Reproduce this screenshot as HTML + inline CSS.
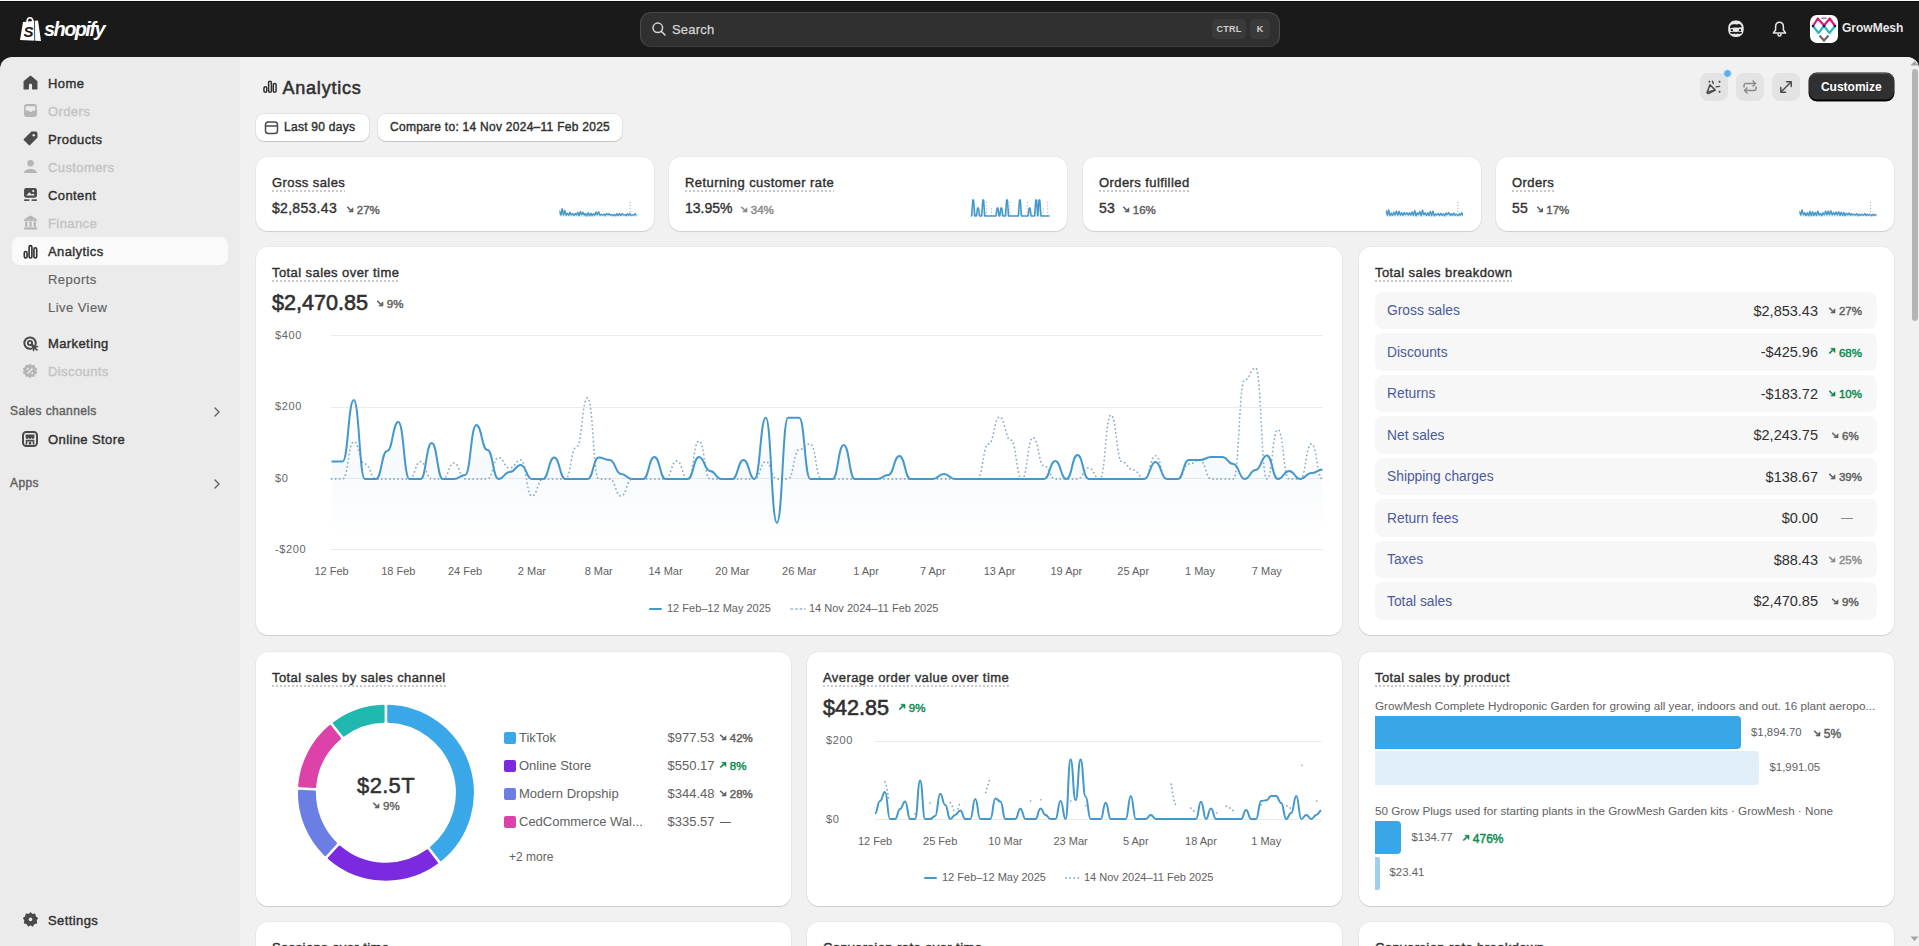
<!DOCTYPE html>
<html><head><meta charset="utf-8">
<style>
*{box-sizing:border-box;margin:0;padding:0}
html,body{width:1919px;height:946px;overflow:hidden;background:#1a1a1a;font-family:"Liberation Sans",sans-serif;color:#303030}
.abs{position:absolute}
#top{position:absolute;left:0;top:0;width:1919px;height:57px;background:#1a1a1a}
#side{position:absolute;left:0;top:57px;width:240px;height:889px;background:#ebebeb;border-top-left-radius:12px}
#main{position:absolute;left:240px;top:57px;width:1679px;height:889px;background:#f1f1f1;border-top-right-radius:12px;overflow:hidden}
.card{position:absolute;background:#fff;border-radius:12px;box-shadow:0 1px 0 rgba(26,26,26,.07),0 1px 0 0 rgba(0,0,0,.05) inset;box-shadow:0 1px 1px rgba(0,0,0,.12), 0 0 0 1px rgba(0,0,0,.03)}
.ttl{position:absolute;font-size:13px;font-weight:normal;-webkit-text-stroke:.4px #303030;color:#303030;white-space:nowrap;letter-spacing:.42px}
.ttl span{background-image:linear-gradient(to right,#c9c9c9 50%,transparent 50%);background-size:4px 1.6px;background-repeat:repeat-x;background-position:0 100%;padding-bottom:1.5px}
.nav{position:absolute;left:48px;font-size:13px;font-weight:normal;-webkit-text-stroke:.4px #303030;letter-spacing:.4px;color:#303030;white-space:nowrap}
.nav.dis{color:#c4c4c4;-webkit-text-stroke:.4px #c4c4c4}
.nav.sub{-webkit-text-stroke:.15px #616161;letter-spacing:.45px;color:#616161}
.ico{position:absolute;left:23px}
.btn{background:#fff;border-radius:8px;box-shadow:0 1px 0 rgba(0,0,0,.12),0 0 0 1px rgba(0,0,0,.06)}
.btxt{font-size:12px;font-weight:normal;-webkit-text-stroke:.4px #303030;letter-spacing:.27px;color:#303030;white-space:nowrap}
.ibtn{width:28px;height:28px;border-radius:8px;background:#e3e3e3}
.kv{font-size:14px;font-weight:normal;color:#303030;white-space:nowrap;letter-spacing:.3px;-webkit-text-stroke:.35px #303030}
</style></head><body>
<div id="top">
  <!-- logo -->
  <svg class="abs" style="left:19px;top:16px" width="24" height="26" viewBox="0 0 24 26"><path d="M4 6 L19 4.5 L22 25 L1 24 Z" fill="#fff"/><path d="M8 6 C8 1 13 0 14 5" stroke="#fff" stroke-width="1.6" fill="none"/><path d="M15.5 4.7 L15.7 25" stroke="#1a1a1a" stroke-width="0.8"/><text x="4.5" y="21" font-family="Liberation Sans" font-weight="bold" font-style="italic" font-size="15" fill="#1a1a1a">S</text></svg>
  <div class="abs" style="left:44px;top:18px;font-size:20px;font-weight:bold;font-style:italic;color:#fff;letter-spacing:-1.6px">shopify</div>
  <!-- search -->
  <div class="abs" style="left:640px;top:11.5px;width:640px;height:35.5px;background:#303030;border:1px solid #4a4a4a;border-bottom-color:#3e3e3e;border-radius:11px"></div>
  <svg class="abs" style="left:651px;top:21px" width="16" height="16" viewBox="0 0 16 16"><circle cx="6.8" cy="6.8" r="4.8" fill="none" stroke="#d4d4d4" stroke-width="1.5"/><path d="M10.3 10.3 L14 14" stroke="#d4d4d4" stroke-width="1.6" stroke-linecap="round"/></svg>
  <div class="abs" style="left:672px;top:22px;font-size:13px;color:#d4d4d4;-webkit-text-stroke:.25px #d4d4d4;letter-spacing:.2px">Search</div>
  <div class="abs" style="left:1212px;top:19px;width:34px;height:20px;background:#3a3a3a;border-radius:5px;font-size:9px;font-weight:bold;color:#cfcfcf;text-align:center;line-height:20px;letter-spacing:.2px">CTRL</div>
  <div class="abs" style="left:1250px;top:19px;width:20px;height:20px;background:#3a3a3a;border-radius:5px;font-size:9px;font-weight:bold;color:#cfcfcf;text-align:center;line-height:20px">K</div>
  <!-- right icons -->
  <svg class="abs" style="left:1727px;top:20px" width="18" height="18" viewBox="0 0 18 18"><rect x="1.2" y="0.6" width="15.5" height="16.4" rx="7" fill="#e8e8e8"/><path d="M2.8 8.5 C3 6 4 4.2 5.5 4.6 C7.5 3.6 9.5 4.8 11 4.2 C13 3.6 14.5 5 14.8 7.5 C13 7 11.5 8 9.5 7.6 C7.5 7.3 5.5 7.8 2.8 8.5 Z" fill="#1a1a1a"/><circle cx="4.8" cy="10.2" r="1.15" fill="#1a1a1a"/><circle cx="13" cy="10.2" r="1.15" fill="#1a1a1a"/><path d="M2.6 12.6 C4.5 11.6 7 11.6 9 12.2 C11 11.6 13.5 11.6 15.4 12.6 C14 14.4 11.5 14 10.2 13.6 C9.8 14.6 8.2 14.6 7.8 13.6 C6.5 14 4 14.4 2.6 12.6 Z" fill="#1a1a1a"/></svg>
  <svg class="abs" style="left:1771px;top:20px" width="17" height="18" viewBox="0 0 17 18"><path d="M8.5 2.2 C5.8 2.2 4.6 4.5 4.6 7 V10 L2.4 12.9 H14.6 L12.4 10 V7 C12.4 4.5 11.2 2.2 8.5 2.2 Z" fill="none" stroke="#e8e8e8" stroke-width="1.5" stroke-linejoin="round"/><path d="M7 13.5 V14.5 A1.5 1.5 0 0 0 10 14.5 V13.5" fill="none" stroke="#e8e8e8" stroke-width="1.5"/></svg>
  <svg class="abs" style="left:1810px;top:15px" width="28" height="28" viewBox="0 0 28 28"><rect width="28" height="28" rx="7" fill="#fff"/><path d="M3 11 L7.8 3.5 L14 10.5 L19.8 3.5 L25 11" fill="none" stroke="#d11f7f" stroke-width="2.2" stroke-linejoin="round"/><path d="M3 11 L8.5 18 L14 11 L19.5 18 L25 11" fill="none" stroke="#2cb7c4" stroke-width="2.2" stroke-linejoin="round"/><path d="M9.5 20.5 L14 25.5 L18.5 20.5" fill="none" stroke="#6b6b6b" stroke-width="2.2"/><rect x="11.5" y="2.5" width="5" height="1.5" fill="#888"/><circle cx="3" cy="11" r="1.3" fill="#1b1464"/><circle cx="14" cy="11" r="1.3" fill="#1b1464"/><circle cx="25" cy="11" r="1.3" fill="#1b1464"/></svg>
  <div class="abs" style="left:1842px;top:21px;font-size:12px;font-weight:bold;color:#e8e8e8">GrowMesh</div>
</div>
<div id="side">
  <!-- Home -->
  <svg class="ico" style="top:18px" width="15" height="15" viewBox="0 0 14 14"><path d="M7 1 L13 6 V13 H9 V9.5 A2 2 0 0 0 5 9.5 V13 H1 V6 Z" fill="#4a4a4a" stroke="#4a4a4a" stroke-width="1" stroke-linejoin="round"/></svg>
  <div class="nav" style="top:19px">Home</div>
  <svg class="ico" style="top:46px" width="15" height="15" viewBox="0 0 14 14"><rect x="1" y="1" width="12" height="12" rx="2.5" fill="#b5b5b5"/><path d="M2.5 3 H11.5 V7 H9 C8.5 8.5 5.5 8.5 5 7 H2.5 Z" fill="#ebebeb"/></svg>
  <div class="nav dis" style="top:47px">Orders</div>
  <svg class="ico" style="top:74px" width="15" height="15" viewBox="0 0 14 14"><path d="M8 1 H12 A1 1 0 0 1 13 2 V6 L6 13 L1 8 Z" fill="#4a4a4a" stroke="#4a4a4a" stroke-linejoin="round"/><circle cx="10" cy="4" r="1.1" fill="#ebebeb"/></svg>
  <div class="nav" style="top:75px">Products</div>
  <svg class="ico" style="top:102px" width="15" height="15" viewBox="0 0 14 14"><circle cx="7" cy="4" r="3" fill="#b5b5b5"/><path d="M1 13 C1 8 13 8 13 13 Z" fill="#b5b5b5"/></svg>
  <div class="nav dis" style="top:103px">Customers</div>
  <svg class="ico" style="top:130px" width="15" height="15" viewBox="0 0 14 14"><rect x="1" y="1" width="12" height="9" rx="2" fill="#4a4a4a"/><path d="M3 8 L6 5 L8 7 L9.5 6 L11 8 Z" fill="#ebebeb"/><circle cx="9.5" cy="3.8" r="1" fill="#ebebeb"/><rect x="1" y="11.5" width="5" height="1.5" fill="#4a4a4a"/><rect x="8" y="11.5" width="5" height="1.5" fill="#4a4a4a"/></svg>
  <div class="nav" style="top:131px">Content</div>
  <svg class="ico" style="top:158px" width="15" height="15" viewBox="0 0 14 14"><path d="M7 0.5 L13 4 H1 Z" fill="#b5b5b5"/><rect x="1" y="4" width="12" height="1.5" fill="#b5b5b5"/><rect x="2" y="6" width="2" height="5" fill="#b5b5b5"/><rect x="6" y="6" width="2" height="5" fill="#b5b5b5"/><rect x="10" y="6" width="2" height="5" fill="#b5b5b5"/><rect x="1" y="11.5" width="12" height="2" fill="#b5b5b5"/></svg>
  <div class="nav dis" style="top:159px">Finance</div>
  <div class="abs" style="left:12px;top:180px;width:216px;height:28px;background:#fafafa;border-radius:8px"></div>
  <svg class="ico" style="top:187px" width="15" height="15" viewBox="0 0 14 14"><rect x="1.2" y="7" width="2.6" height="6" rx="1.3" fill="none" stroke="#303030" stroke-width="1.5"/><rect x="5.7" y="1.5" width="2.6" height="11.5" rx="1.3" fill="none" stroke="#303030" stroke-width="1.5"/><rect x="10.2" y="3.5" width="2.6" height="9.5" rx="1.3" fill="none" stroke="#303030" stroke-width="1.5"/></svg>
  <div class="nav" style="top:187px">Analytics</div>
  <div class="nav sub" style="top:215px">Reports</div>
  <div class="nav sub" style="top:243px">Live View</div>
  <svg class="abs" style="left:22.5px;top:278.5px" width="16" height="16" viewBox="0 0 16 16"><path d="M12.6 8.3 A5.7 5.7 0 1 0 8.1 12.7" fill="none" stroke="#4a4a4a" stroke-width="2" stroke-linecap="round"/><circle cx="7" cy="7" r="2.1" fill="none" stroke="#4a4a4a" stroke-width="1.9"/><path d="M8.2 8.2 L15.2 10.6 L12.3 11.6 L14.6 13.9 L13.9 14.6 L11.6 12.3 L10.6 15.2 Z" fill="#4a4a4a" stroke="#4a4a4a" stroke-width=".8" stroke-linejoin="round"/></svg>
  <div class="nav" style="top:279px">Marketing</div>
  <svg class="abs" style="left:22px;top:306px" width="16" height="16" viewBox="0 0 14 14"><path d="M7 0.5 L8.6 2 L10.8 1.6 L11.3 3.7 L13.3 4.7 L12.5 6.8 L13.3 9 L11.3 10 L10.8 12.2 L8.6 11.8 L7 13.5 L5.4 11.8 L3.2 12.2 L2.7 10 L0.7 9 L1.5 6.8 L0.7 4.7 L2.7 3.7 L3.2 1.6 L5.4 2 Z" fill="#b5b5b5"/><path d="M4.8 9.2 L9.2 4.8" stroke="#ebebeb" stroke-width="1.2"/><circle cx="5" cy="5" r=".9" fill="#ebebeb"/><circle cx="9" cy="9" r=".9" fill="#ebebeb"/></svg>
  <div class="nav dis" style="top:307px">Discounts</div>
  <div class="abs" style="left:10px;top:347px;font-size:12px;font-weight:normal;-webkit-text-stroke:.4px #616161;letter-spacing:.38px;color:#616161">Sales channels</div>
  <svg class="abs" style="left:213px;top:349px" width="8" height="12" viewBox="0 0 8 12"><path d="M2 2 L6 6 L2 10" fill="none" stroke="#616161" stroke-width="1.4" stroke-linecap="round" stroke-linejoin="round"/></svg>
  <svg class="abs" style="left:22px;top:374px" width="16" height="16" viewBox="0 0 16 16"><rect x="1" y="1" width="14" height="14" rx="3.2" fill="none" stroke="#4a4a4a" stroke-width="2"/><path d="M3.6 3.6 H12.4 V6.6 A1.47 1.47 0 0 1 9.47 6.6 A1.47 1.47 0 0 1 6.53 6.6 A1.47 1.47 0 0 1 3.6 6.6 Z" fill="#4a4a4a"/><path d="M4.5 13.5 V9.6 H11.5 V13.5" fill="none" stroke="#4a4a4a" stroke-width="1.6"/><rect x="6.8" y="10.8" width="2.4" height="2.7" fill="#4a4a4a"/></svg>
  <div class="nav" style="top:375px">Online Store</div>
  <div class="abs" style="left:10px;top:419px;font-size:12px;font-weight:normal;-webkit-text-stroke:.4px #616161;letter-spacing:.38px;color:#616161">Apps</div>
  <svg class="abs" style="left:213px;top:421px" width="8" height="12" viewBox="0 0 8 12"><path d="M2 2 L6 6 L2 10" fill="none" stroke="#616161" stroke-width="1.4" stroke-linecap="round" stroke-linejoin="round"/></svg>
  <svg class="ico" style="top:855px" width="15" height="15" viewBox="0 0 15 15"><path d="M7.5 0.8 L9.2 2.6 L11.8 2.2 L12.3 4.8 L14.4 6.3 L13 8.5 L13.6 11 L11 11.6 L9.6 13.9 L7.5 12.6 L5.4 13.9 L4 11.6 L1.4 11 L2 8.5 L0.6 6.3 L2.7 4.8 L3.2 2.2 L5.8 2.6 Z" fill="#4a4a4a" stroke="#4a4a4a" stroke-linejoin="round" stroke-width="1.2"/><circle cx="7.5" cy="7.4" r="1.8" fill="#ebebeb"/></svg>
  <div class="nav" style="top:856px">Settings</div>
</div>
<div id="main"></div>
<!-- header -->
<svg class="abs" style="left:263px;top:80px" width="14" height="13.5" viewBox="0 0 15 14"><rect x="1" y="7" width="3" height="6" rx="1.5" fill="none" stroke="#303030" stroke-width="1.6"/><rect x="6" y="1" width="3" height="12" rx="1.5" fill="none" stroke="#303030" stroke-width="1.6"/><rect x="11" y="3.5" width="3" height="9.5" rx="1.5" fill="none" stroke="#303030" stroke-width="1.6"/></svg>
<div class="abs" style="left:282.5px;top:77.5px;font-size:18px;font-weight:normal;-webkit-text-stroke:.55px #303030;letter-spacing:.78px;color:#303030">Analytics</div>
<div class="abs btn" style="left:256px;top:114px;width:113px;height:26.5px"></div>
<svg class="abs" style="left:264px;top:120px" width="15" height="15" viewBox="0 0 15 15"><rect x="1.5" y="2" width="12" height="11.5" rx="2.8" fill="none" stroke="#4a4a4a" stroke-width="1.5"/><path d="M1.5 6 H13.5" stroke="#4a4a4a" stroke-width="1.5"/></svg>
<div class="abs btxt" style="left:284px;top:120px">Last 90 days</div>
<div class="abs btn" style="left:378px;top:114px;width:244px;height:26.5px"></div>
<div class="abs btxt" style="left:390px;top:120px">Compare to: 14 Nov 2024–11 Feb 2025</div>
<div class="abs ibtn" style="left:1700px;top:73px"></div>
<svg class="abs" style="left:1705px;top:78px" width="18" height="18" viewBox="0 0 18 18"><path d="M2.2 14.2 L4.9 6.8 L10.2 12.1 Z" fill="none" stroke="#4a4a4a" stroke-width="1.5" stroke-linejoin="round"/><path d="M2.2 14.2 C2 15.5 3 15.8 4 15.3 L10.2 12.1" fill="none" stroke="#4a4a4a" stroke-width="1.5" stroke-linejoin="round"/><circle cx="4.4" cy="3.8" r="1" fill="#4a4a4a"/><path d="M7.5 3.2 L8.3 5.6" stroke="#4a4a4a" stroke-width="1.4" stroke-linecap="round"/><path d="M14.6 2.6 L15.8 3.8 L14.6 5 L13.4 3.8Z" fill="#4a4a4a"/><path d="M11.2 8.9 L14.6 8.4" stroke="#4a4a4a" stroke-width="1.4" stroke-linecap="round"/><path d="M14.6 12.6 L15.8 13.8 L14.6 15 L13.4 13.8Z" fill="#4a4a4a"/></svg>
<div class="abs" style="left:1723px;top:69px;width:9px;height:9px;border-radius:50%;background:#5bb0f0;border:1.5px solid #f1f1f1"></div>
<div class="abs ibtn" style="left:1736px;top:73px"></div>
<svg class="abs" style="left:1741px;top:78px" width="18" height="18" viewBox="0 0 18 18"><path d="M3 9.5 V7.5 A2 2 0 0 1 5 5.5 H14" fill="none" stroke="#8a8a8a" stroke-width="1.5"/><path d="M12 3 L14.5 5.5 L12 8" fill="none" stroke="#8a8a8a" stroke-width="1.5" stroke-linejoin="round" stroke-linecap="round"/><path d="M15 8.5 V10.5 A2 2 0 0 1 13 12.5 H4" fill="none" stroke="#8a8a8a" stroke-width="1.5"/><path d="M6 10 L3.5 12.5 L6 15" fill="none" stroke="#8a8a8a" stroke-width="1.5" stroke-linejoin="round" stroke-linecap="round"/></svg>
<div class="abs ibtn" style="left:1772px;top:73px"></div>
<svg class="abs" style="left:1777px;top:78px" width="18" height="18" viewBox="0 0 18 18"><path d="M4 14 L14 4" stroke="#4a4a4a" stroke-width="1.5"/><path d="M9.5 3.8 H14.2 V8.5" fill="none" stroke="#4a4a4a" stroke-width="1.5" stroke-linecap="round" stroke-linejoin="round"/><path d="M3.8 9.5 V14.2 H8.5" fill="none" stroke="#4a4a4a" stroke-width="1.5" stroke-linecap="round" stroke-linejoin="round"/></svg>
<div class="abs" style="left:1808.5px;top:73px;width:85.5px;height:27.5px;background:#303030;border-radius:8px;box-shadow:0 -1.5px 0 #000 inset,0 1px 0 rgba(255,255,255,.18) inset, 0 0 0 .5px #111;color:#fff;font-size:12px;font-weight:bold;text-align:center;line-height:29px">Customize</div>

<div class="card" style="left:256px;top:157px;width:398px;height:74px;"></div>
<div class="ttl" style="left:272px;top:175px"><span>Gross sales</span></div>
<div class="abs kv" style="left:272px;top:200px;">$2,853.43</div>
<div class="card" style="left:669px;top:157px;width:398px;height:74px;"></div>
<div class="ttl" style="left:685px;top:175px"><span>Returning customer rate</span></div>
<div class="abs kv" style="left:685px;top:200px;letter-spacing:0">13.95%</div>
<div class="card" style="left:1083px;top:157px;width:398px;height:74px;"></div>
<div class="ttl" style="left:1099px;top:175px"><span>Orders fulfilled</span></div>
<div class="abs kv" style="left:1099px;top:200px;">53</div>
<div class="card" style="left:1496px;top:157px;width:398px;height:74px;"></div>
<div class="ttl" style="left:1512px;top:175px"><span>Orders</span></div>
<div class="abs kv" style="left:1512px;top:200px;">55</div>
<div id="kpideltas"></div>
<div class="abs" style="left:346px;top:204px;font-size:11.5px;font-weight:normal;-webkit-text-stroke:.45px #616161;color:#616161;white-space:nowrap"><svg width="7.8" height="7.8" viewBox="0 0 8 8" style="vertical-align:1.3px;margin-right:3px"><path d="M1.3 1.8 L4.6 5.1" stroke="#616161" stroke-width="1.7"/><path d="M7.2 2.8 V7.2 H2.8 Z" fill="#616161" stroke="#616161" stroke-width=".6" stroke-linejoin="round"/></svg>27%</div>
<div class="abs" style="left:740px;top:204px;font-size:11.5px;font-weight:normal;-webkit-text-stroke:.45px #8a8a8a;color:#8a8a8a;white-space:nowrap"><svg width="7.8" height="7.8" viewBox="0 0 8 8" style="vertical-align:1.3px;margin-right:3px"><path d="M1.3 1.8 L4.6 5.1" stroke="#8a8a8a" stroke-width="1.7"/><path d="M7.2 2.8 V7.2 H2.8 Z" fill="#8a8a8a" stroke="#8a8a8a" stroke-width=".6" stroke-linejoin="round"/></svg>34%</div>
<div class="abs" style="left:1122px;top:204px;font-size:11.5px;font-weight:normal;-webkit-text-stroke:.45px #616161;color:#616161;white-space:nowrap"><svg width="7.8" height="7.8" viewBox="0 0 8 8" style="vertical-align:1.3px;margin-right:3px"><path d="M1.3 1.8 L4.6 5.1" stroke="#616161" stroke-width="1.7"/><path d="M7.2 2.8 V7.2 H2.8 Z" fill="#616161" stroke="#616161" stroke-width=".6" stroke-linejoin="round"/></svg>16%</div>
<div class="abs" style="left:1535.5px;top:204px;font-size:11.5px;font-weight:normal;-webkit-text-stroke:.45px #616161;color:#616161;white-space:nowrap"><svg width="7.8" height="7.8" viewBox="0 0 8 8" style="vertical-align:1.3px;margin-right:3px"><path d="M1.3 1.8 L4.6 5.1" stroke="#616161" stroke-width="1.7"/><path d="M7.2 2.8 V7.2 H2.8 Z" fill="#616161" stroke="#616161" stroke-width=".6" stroke-linejoin="round"/></svg>17%</div>
<svg class="abs" style="left:0;top:0;overflow:visible" width="1" height="1"><path d="M559.5 210.6 C560.2 210.6 560.2 215.3 560.8 215.3 C561.5 215.3 561.5 208.8 562.1 208.8 C562.8 208.8 562.8 215.4 563.4 215.4 C564.1 215.4 564.1 210.3 564.7 210.3 C565.4 210.3 565.4 215.3 566.0 215.3 C566.7 215.3 566.7 213.3 567.3 213.3 C568.0 213.3 568.0 215.4 568.6 215.4 C569.3 215.4 569.3 212.3 569.9 212.3 C570.6 212.3 570.6 215.0 571.2 215.0 C571.9 215.0 571.9 213.5 572.6 213.5 C573.2 213.5 573.2 215.6 573.9 215.6 C574.5 215.6 574.5 213.5 575.2 213.5 C575.8 213.5 575.8 215.0 576.5 215.0 C577.1 215.0 577.1 212.2 577.8 212.2 C578.4 212.2 578.4 215.9 579.1 215.9 C579.7 215.9 579.7 211.5 580.4 211.5 C581.0 211.5 581.0 214.8 581.7 214.8 C582.3 214.8 582.3 212.3 583.0 212.3 C583.6 212.3 583.6 215.3 584.3 215.3 C584.9 215.3 584.9 213.4 585.6 213.4 C586.3 213.4 586.3 216.0 586.9 216.0 C587.6 216.0 587.6 212.6 588.2 212.6 C588.9 212.6 588.9 215.9 589.5 215.9 C590.2 215.9 590.2 213.3 590.8 213.3 C591.5 213.3 591.5 215.7 592.1 215.7 C592.8 215.7 592.8 213.7 593.4 213.7 C594.1 213.7 594.1 215.4 594.7 215.4 C595.4 215.4 595.4 212.0 596.0 212.0 C596.7 212.0 596.7 215.0 597.3 215.0 C598.0 215.0 598.0 211.8 598.7 211.8 C599.3 211.8 599.3 215.2 600.0 215.2 C600.6 215.2 600.6 214.1 601.3 214.1 C601.9 214.1 601.9 215.2 602.6 215.2 C603.2 215.2 603.2 214.2 603.9 214.2 C604.5 214.2 604.5 215.7 605.2 215.7 C605.8 215.7 605.8 213.5 606.5 213.5 C607.1 213.5 607.1 214.8 607.8 214.8 C608.4 214.8 608.4 213.7 609.1 213.7 C609.7 213.7 609.7 215.2 610.4 215.2 C611.1 215.2 611.1 214.4 611.7 214.4 C612.4 214.4 612.4 215.7 613.0 215.7 C613.7 215.7 613.7 214.4 614.3 214.4 C615.0 214.4 615.0 215.9 615.6 215.9 C616.3 215.9 616.3 213.8 616.9 213.8 C617.6 213.8 617.6 215.5 618.2 215.5 C618.9 215.5 618.9 213.7 619.5 213.7 C620.2 213.7 620.2 215.5 620.8 215.5 C621.5 215.5 621.5 213.6 622.1 213.6 C622.8 213.6 622.8 215.0 623.4 215.0 C624.1 215.0 624.1 214.7 624.8 214.7 C625.4 214.7 625.4 215.7 626.1 215.7 C626.7 215.7 626.7 213.6 627.4 213.6 C628.0 213.6 628.0 215.4 628.7 215.4 C629.3 215.4 629.3 213.5 630.0 213.5 C630.6 213.5 630.6 215.5 631.3 215.5 C631.9 215.5 631.9 214.7 632.6 214.7 C633.2 214.7 633.2 215.2 633.9 215.2 C634.5 215.2 634.5 213.8 635.2 213.8 C635.8 213.8 635.8 215.7 636.5 215.7 L636.5 217 L559.5 217Z" fill="#e6f4fc"/><path d="M559.5 210.6 C560.2 210.6 560.2 215.3 560.8 215.3 C561.5 215.3 561.5 208.8 562.1 208.8 C562.8 208.8 562.8 215.4 563.4 215.4 C564.1 215.4 564.1 210.3 564.7 210.3 C565.4 210.3 565.4 215.3 566.0 215.3 C566.7 215.3 566.7 213.3 567.3 213.3 C568.0 213.3 568.0 215.4 568.6 215.4 C569.3 215.4 569.3 212.3 569.9 212.3 C570.6 212.3 570.6 215.0 571.2 215.0 C571.9 215.0 571.9 213.5 572.6 213.5 C573.2 213.5 573.2 215.6 573.9 215.6 C574.5 215.6 574.5 213.5 575.2 213.5 C575.8 213.5 575.8 215.0 576.5 215.0 C577.1 215.0 577.1 212.2 577.8 212.2 C578.4 212.2 578.4 215.9 579.1 215.9 C579.7 215.9 579.7 211.5 580.4 211.5 C581.0 211.5 581.0 214.8 581.7 214.8 C582.3 214.8 582.3 212.3 583.0 212.3 C583.6 212.3 583.6 215.3 584.3 215.3 C584.9 215.3 584.9 213.4 585.6 213.4 C586.3 213.4 586.3 216.0 586.9 216.0 C587.6 216.0 587.6 212.6 588.2 212.6 C588.9 212.6 588.9 215.9 589.5 215.9 C590.2 215.9 590.2 213.3 590.8 213.3 C591.5 213.3 591.5 215.7 592.1 215.7 C592.8 215.7 592.8 213.7 593.4 213.7 C594.1 213.7 594.1 215.4 594.7 215.4 C595.4 215.4 595.4 212.0 596.0 212.0 C596.7 212.0 596.7 215.0 597.3 215.0 C598.0 215.0 598.0 211.8 598.7 211.8 C599.3 211.8 599.3 215.2 600.0 215.2 C600.6 215.2 600.6 214.1 601.3 214.1 C601.9 214.1 601.9 215.2 602.6 215.2 C603.2 215.2 603.2 214.2 603.9 214.2 C604.5 214.2 604.5 215.7 605.2 215.7 C605.8 215.7 605.8 213.5 606.5 213.5 C607.1 213.5 607.1 214.8 607.8 214.8 C608.4 214.8 608.4 213.7 609.1 213.7 C609.7 213.7 609.7 215.2 610.4 215.2 C611.1 215.2 611.1 214.4 611.7 214.4 C612.4 214.4 612.4 215.7 613.0 215.7 C613.7 215.7 613.7 214.4 614.3 214.4 C615.0 214.4 615.0 215.9 615.6 215.9 C616.3 215.9 616.3 213.8 616.9 213.8 C617.6 213.8 617.6 215.5 618.2 215.5 C618.9 215.5 618.9 213.7 619.5 213.7 C620.2 213.7 620.2 215.5 620.8 215.5 C621.5 215.5 621.5 213.6 622.1 213.6 C622.8 213.6 622.8 215.0 623.4 215.0 C624.1 215.0 624.1 214.7 624.8 214.7 C625.4 214.7 625.4 215.7 626.1 215.7 C626.7 215.7 626.7 213.6 627.4 213.6 C628.0 213.6 628.0 215.4 628.7 215.4 C629.3 215.4 629.3 213.5 630.0 213.5 C630.6 213.5 630.6 215.5 631.3 215.5 C631.9 215.5 631.9 214.7 632.6 214.7 C633.2 214.7 633.2 215.2 633.9 215.2 C634.5 215.2 634.5 213.8 635.2 213.8 C635.8 213.8 635.8 215.7 636.5 215.7" fill="none" stroke="#4598cc" stroke-width="1.4"/><path d="M630.0 215 L630.0 200" fill="none" stroke="#9ab9cc" stroke-width="1" stroke-dasharray="1.2 1.8"/></svg>
<svg class="abs" style="left:0;top:0;overflow:visible" width="1" height="1"><path d="M1386.0 210.5 C1386.7 210.5 1386.7 215.2 1387.3 215.2 C1388.0 215.2 1388.0 209.8 1388.6 209.8 C1389.3 209.8 1389.3 215.8 1389.9 215.8 C1390.6 215.8 1390.6 213.0 1391.2 213.0 C1391.9 213.0 1391.9 215.6 1392.5 215.6 C1393.2 215.6 1393.2 212.2 1393.8 212.2 C1394.5 212.2 1394.5 215.0 1395.1 215.0 C1395.8 215.0 1395.8 210.9 1396.4 210.9 C1397.1 210.9 1397.1 215.3 1397.7 215.3 C1398.4 215.3 1398.4 211.3 1399.1 211.3 C1399.7 211.3 1399.7 215.2 1400.4 215.2 C1401.0 215.2 1401.0 212.6 1401.7 212.6 C1402.3 212.6 1402.3 215.5 1403.0 215.5 C1403.6 215.5 1403.6 212.5 1404.3 212.5 C1404.9 212.5 1404.9 214.9 1405.6 214.9 C1406.2 214.9 1406.2 212.8 1406.9 212.8 C1407.5 212.8 1407.5 215.0 1408.2 215.0 C1408.8 215.0 1408.8 212.8 1409.5 212.8 C1410.1 212.8 1410.1 215.2 1410.8 215.2 C1411.4 215.2 1411.4 212.0 1412.1 212.0 C1412.8 212.0 1412.8 215.5 1413.4 215.5 C1414.1 215.5 1414.1 210.5 1414.7 210.5 C1415.4 210.5 1415.4 216.0 1416.0 216.0 C1416.7 216.0 1416.7 212.8 1417.3 212.8 C1418.0 212.8 1418.0 214.9 1418.6 214.9 C1419.3 214.9 1419.3 211.5 1419.9 211.5 C1420.6 211.5 1420.6 215.9 1421.2 215.9 C1421.9 215.9 1421.9 210.0 1422.5 210.0 C1423.2 210.0 1423.2 214.9 1423.8 214.9 C1424.5 214.9 1424.5 212.7 1425.2 212.7 C1425.8 212.7 1425.8 215.5 1426.5 215.5 C1427.1 215.5 1427.1 212.6 1427.8 212.6 C1428.4 212.6 1428.4 215.6 1429.1 215.6 C1429.7 215.6 1429.7 211.1 1430.4 211.1 C1431.0 211.1 1431.0 215.8 1431.7 215.8 C1432.3 215.8 1432.3 210.9 1433.0 210.9 C1433.6 210.9 1433.6 215.9 1434.3 215.9 C1434.9 215.9 1434.9 214.0 1435.6 214.0 C1436.2 214.0 1436.2 215.0 1436.9 215.0 C1437.6 215.0 1437.6 213.5 1438.2 213.5 C1438.9 213.5 1438.9 215.5 1439.5 215.5 C1440.2 215.5 1440.2 213.2 1440.8 213.2 C1441.5 213.2 1441.5 215.4 1442.1 215.4 C1442.8 215.4 1442.8 213.6 1443.4 213.6 C1444.1 213.6 1444.1 216.0 1444.7 216.0 C1445.4 216.0 1445.4 213.0 1446.0 213.0 C1446.7 213.0 1446.7 214.8 1447.3 214.8 C1448.0 214.8 1448.0 212.5 1448.6 212.5 C1449.3 212.5 1449.3 215.2 1449.9 215.2 C1450.6 215.2 1450.6 213.6 1451.3 213.6 C1451.9 213.6 1451.9 215.6 1452.6 215.6 C1453.2 215.6 1453.2 213.0 1453.9 213.0 C1454.5 213.0 1454.5 215.2 1455.2 215.2 C1455.8 215.2 1455.8 214.1 1456.5 214.1 C1457.1 214.1 1457.1 215.7 1457.8 215.7 C1458.4 215.7 1458.4 213.6 1459.1 213.6 C1459.7 213.6 1459.7 215.4 1460.4 215.4 C1461.0 215.4 1461.0 212.8 1461.7 212.8 C1462.3 212.8 1462.3 215.4 1463.0 215.4 L1463 217 L1386 217Z" fill="#e6f4fc"/><path d="M1386.0 210.5 C1386.7 210.5 1386.7 215.2 1387.3 215.2 C1388.0 215.2 1388.0 209.8 1388.6 209.8 C1389.3 209.8 1389.3 215.8 1389.9 215.8 C1390.6 215.8 1390.6 213.0 1391.2 213.0 C1391.9 213.0 1391.9 215.6 1392.5 215.6 C1393.2 215.6 1393.2 212.2 1393.8 212.2 C1394.5 212.2 1394.5 215.0 1395.1 215.0 C1395.8 215.0 1395.8 210.9 1396.4 210.9 C1397.1 210.9 1397.1 215.3 1397.7 215.3 C1398.4 215.3 1398.4 211.3 1399.1 211.3 C1399.7 211.3 1399.7 215.2 1400.4 215.2 C1401.0 215.2 1401.0 212.6 1401.7 212.6 C1402.3 212.6 1402.3 215.5 1403.0 215.5 C1403.6 215.5 1403.6 212.5 1404.3 212.5 C1404.9 212.5 1404.9 214.9 1405.6 214.9 C1406.2 214.9 1406.2 212.8 1406.9 212.8 C1407.5 212.8 1407.5 215.0 1408.2 215.0 C1408.8 215.0 1408.8 212.8 1409.5 212.8 C1410.1 212.8 1410.1 215.2 1410.8 215.2 C1411.4 215.2 1411.4 212.0 1412.1 212.0 C1412.8 212.0 1412.8 215.5 1413.4 215.5 C1414.1 215.5 1414.1 210.5 1414.7 210.5 C1415.4 210.5 1415.4 216.0 1416.0 216.0 C1416.7 216.0 1416.7 212.8 1417.3 212.8 C1418.0 212.8 1418.0 214.9 1418.6 214.9 C1419.3 214.9 1419.3 211.5 1419.9 211.5 C1420.6 211.5 1420.6 215.9 1421.2 215.9 C1421.9 215.9 1421.9 210.0 1422.5 210.0 C1423.2 210.0 1423.2 214.9 1423.8 214.9 C1424.5 214.9 1424.5 212.7 1425.2 212.7 C1425.8 212.7 1425.8 215.5 1426.5 215.5 C1427.1 215.5 1427.1 212.6 1427.8 212.6 C1428.4 212.6 1428.4 215.6 1429.1 215.6 C1429.7 215.6 1429.7 211.1 1430.4 211.1 C1431.0 211.1 1431.0 215.8 1431.7 215.8 C1432.3 215.8 1432.3 210.9 1433.0 210.9 C1433.6 210.9 1433.6 215.9 1434.3 215.9 C1434.9 215.9 1434.9 214.0 1435.6 214.0 C1436.2 214.0 1436.2 215.0 1436.9 215.0 C1437.6 215.0 1437.6 213.5 1438.2 213.5 C1438.9 213.5 1438.9 215.5 1439.5 215.5 C1440.2 215.5 1440.2 213.2 1440.8 213.2 C1441.5 213.2 1441.5 215.4 1442.1 215.4 C1442.8 215.4 1442.8 213.6 1443.4 213.6 C1444.1 213.6 1444.1 216.0 1444.7 216.0 C1445.4 216.0 1445.4 213.0 1446.0 213.0 C1446.7 213.0 1446.7 214.8 1447.3 214.8 C1448.0 214.8 1448.0 212.5 1448.6 212.5 C1449.3 212.5 1449.3 215.2 1449.9 215.2 C1450.6 215.2 1450.6 213.6 1451.3 213.6 C1451.9 213.6 1451.9 215.6 1452.6 215.6 C1453.2 215.6 1453.2 213.0 1453.9 213.0 C1454.5 213.0 1454.5 215.2 1455.2 215.2 C1455.8 215.2 1455.8 214.1 1456.5 214.1 C1457.1 214.1 1457.1 215.7 1457.8 215.7 C1458.4 215.7 1458.4 213.6 1459.1 213.6 C1459.7 213.6 1459.7 215.4 1460.4 215.4 C1461.0 215.4 1461.0 212.8 1461.7 212.8 C1462.3 212.8 1462.3 215.4 1463.0 215.4" fill="none" stroke="#4598cc" stroke-width="1.4"/><path d="M1458 215 L1458 200" fill="none" stroke="#9ab9cc" stroke-width="1" stroke-dasharray="1.2 1.8"/></svg>
<svg class="abs" style="left:0;top:0;overflow:visible" width="1" height="1"><path d="M1799.5 211.3 C1800.2 211.3 1800.2 215.2 1800.8 215.2 C1801.5 215.2 1801.5 209.7 1802.1 209.7 C1802.8 209.7 1802.8 215.0 1803.4 215.0 C1804.1 215.0 1804.1 212.7 1804.7 212.7 C1805.4 212.7 1805.4 215.7 1806.0 215.7 C1806.7 215.7 1806.7 212.8 1807.3 212.8 C1808.0 212.8 1808.0 215.7 1808.6 215.7 C1809.3 215.7 1809.3 211.2 1809.9 211.2 C1810.6 211.2 1810.6 215.8 1811.2 215.8 C1811.9 215.8 1811.9 211.8 1812.6 211.8 C1813.2 211.8 1813.2 215.7 1813.9 215.7 C1814.5 215.7 1814.5 212.4 1815.2 212.4 C1815.8 212.4 1815.8 215.5 1816.5 215.5 C1817.1 215.5 1817.1 210.9 1817.8 210.9 C1818.4 210.9 1818.4 215.3 1819.1 215.3 C1819.7 215.3 1819.7 213.2 1820.4 213.2 C1821.0 213.2 1821.0 215.7 1821.7 215.7 C1822.3 215.7 1822.3 212.8 1823.0 212.8 C1823.6 212.8 1823.6 215.0 1824.3 215.0 C1824.9 215.0 1824.9 211.0 1825.6 211.0 C1826.3 211.0 1826.3 215.0 1826.9 215.0 C1827.6 215.0 1827.6 211.0 1828.2 211.0 C1828.9 211.0 1828.9 215.1 1829.5 215.1 C1830.2 215.1 1830.2 210.6 1830.8 210.6 C1831.5 210.6 1831.5 215.0 1832.1 215.0 C1832.8 215.0 1832.8 212.5 1833.4 212.5 C1834.1 212.5 1834.1 215.0 1834.7 215.0 C1835.4 215.0 1835.4 211.9 1836.0 211.9 C1836.7 211.9 1836.7 215.1 1837.3 215.1 C1838.0 215.1 1838.0 211.7 1838.7 211.7 C1839.3 211.7 1839.3 215.5 1840.0 215.5 C1840.6 215.5 1840.6 212.2 1841.3 212.2 C1841.9 212.2 1841.9 215.5 1842.6 215.5 C1843.2 215.5 1843.2 212.4 1843.9 212.4 C1844.5 212.4 1844.5 215.9 1845.2 215.9 C1845.8 215.9 1845.8 213.3 1846.5 213.3 C1847.1 213.3 1847.1 215.0 1847.8 215.0 C1848.4 215.0 1848.4 213.0 1849.1 213.0 C1849.7 213.0 1849.7 215.2 1850.4 215.2 C1851.1 215.2 1851.1 213.7 1851.7 213.7 C1852.4 213.7 1852.4 215.1 1853.0 215.1 C1853.7 215.1 1853.7 214.3 1854.3 214.3 C1855.0 214.3 1855.0 215.2 1855.6 215.2 C1856.3 215.2 1856.3 213.8 1856.9 213.8 C1857.6 213.8 1857.6 215.8 1858.2 215.8 C1858.9 215.8 1858.9 214.2 1859.5 214.2 C1860.2 214.2 1860.2 215.4 1860.8 215.4 C1861.5 215.4 1861.5 214.1 1862.1 214.1 C1862.8 214.1 1862.8 215.4 1863.4 215.4 C1864.1 215.4 1864.1 213.6 1864.8 213.6 C1865.4 213.6 1865.4 215.5 1866.1 215.5 C1866.7 215.5 1866.7 214.3 1867.4 214.3 C1868.0 214.3 1868.0 215.4 1868.7 215.4 C1869.3 215.4 1869.3 214.1 1870.0 214.1 C1870.6 214.1 1870.6 215.7 1871.3 215.7 C1871.9 215.7 1871.9 214.2 1872.6 214.2 C1873.2 214.2 1873.2 215.6 1873.9 215.6 C1874.5 215.6 1874.5 214.4 1875.2 214.4 C1875.8 214.4 1875.8 215.2 1876.5 215.2 L1876.5 217 L1799.5 217Z" fill="#e6f4fc"/><path d="M1799.5 211.3 C1800.2 211.3 1800.2 215.2 1800.8 215.2 C1801.5 215.2 1801.5 209.7 1802.1 209.7 C1802.8 209.7 1802.8 215.0 1803.4 215.0 C1804.1 215.0 1804.1 212.7 1804.7 212.7 C1805.4 212.7 1805.4 215.7 1806.0 215.7 C1806.7 215.7 1806.7 212.8 1807.3 212.8 C1808.0 212.8 1808.0 215.7 1808.6 215.7 C1809.3 215.7 1809.3 211.2 1809.9 211.2 C1810.6 211.2 1810.6 215.8 1811.2 215.8 C1811.9 215.8 1811.9 211.8 1812.6 211.8 C1813.2 211.8 1813.2 215.7 1813.9 215.7 C1814.5 215.7 1814.5 212.4 1815.2 212.4 C1815.8 212.4 1815.8 215.5 1816.5 215.5 C1817.1 215.5 1817.1 210.9 1817.8 210.9 C1818.4 210.9 1818.4 215.3 1819.1 215.3 C1819.7 215.3 1819.7 213.2 1820.4 213.2 C1821.0 213.2 1821.0 215.7 1821.7 215.7 C1822.3 215.7 1822.3 212.8 1823.0 212.8 C1823.6 212.8 1823.6 215.0 1824.3 215.0 C1824.9 215.0 1824.9 211.0 1825.6 211.0 C1826.3 211.0 1826.3 215.0 1826.9 215.0 C1827.6 215.0 1827.6 211.0 1828.2 211.0 C1828.9 211.0 1828.9 215.1 1829.5 215.1 C1830.2 215.1 1830.2 210.6 1830.8 210.6 C1831.5 210.6 1831.5 215.0 1832.1 215.0 C1832.8 215.0 1832.8 212.5 1833.4 212.5 C1834.1 212.5 1834.1 215.0 1834.7 215.0 C1835.4 215.0 1835.4 211.9 1836.0 211.9 C1836.7 211.9 1836.7 215.1 1837.3 215.1 C1838.0 215.1 1838.0 211.7 1838.7 211.7 C1839.3 211.7 1839.3 215.5 1840.0 215.5 C1840.6 215.5 1840.6 212.2 1841.3 212.2 C1841.9 212.2 1841.9 215.5 1842.6 215.5 C1843.2 215.5 1843.2 212.4 1843.9 212.4 C1844.5 212.4 1844.5 215.9 1845.2 215.9 C1845.8 215.9 1845.8 213.3 1846.5 213.3 C1847.1 213.3 1847.1 215.0 1847.8 215.0 C1848.4 215.0 1848.4 213.0 1849.1 213.0 C1849.7 213.0 1849.7 215.2 1850.4 215.2 C1851.1 215.2 1851.1 213.7 1851.7 213.7 C1852.4 213.7 1852.4 215.1 1853.0 215.1 C1853.7 215.1 1853.7 214.3 1854.3 214.3 C1855.0 214.3 1855.0 215.2 1855.6 215.2 C1856.3 215.2 1856.3 213.8 1856.9 213.8 C1857.6 213.8 1857.6 215.8 1858.2 215.8 C1858.9 215.8 1858.9 214.2 1859.5 214.2 C1860.2 214.2 1860.2 215.4 1860.8 215.4 C1861.5 215.4 1861.5 214.1 1862.1 214.1 C1862.8 214.1 1862.8 215.4 1863.4 215.4 C1864.1 215.4 1864.1 213.6 1864.8 213.6 C1865.4 213.6 1865.4 215.5 1866.1 215.5 C1866.7 215.5 1866.7 214.3 1867.4 214.3 C1868.0 214.3 1868.0 215.4 1868.7 215.4 C1869.3 215.4 1869.3 214.1 1870.0 214.1 C1870.6 214.1 1870.6 215.7 1871.3 215.7 C1871.9 215.7 1871.9 214.2 1872.6 214.2 C1873.2 214.2 1873.2 215.6 1873.9 215.6 C1874.5 215.6 1874.5 214.4 1875.2 214.4 C1875.8 214.4 1875.8 215.2 1876.5 215.2" fill="none" stroke="#4598cc" stroke-width="1.4"/><path d="M1870.5 215 L1870.5 200" fill="none" stroke="#9ab9cc" stroke-width="1" stroke-dasharray="1.2 1.8"/></svg>
<svg class="abs" style="left:0;top:0;overflow:visible" width="1" height="1"><path d=" M986.4 216 L986.4 200.0 M991.5 216 L991.5 208.0 M1009.9 216 L1009.9 200.0 M1027.3 216 L1027.3 200.0 M1043.1 216 L1043.1 208.0 M1047.7 216 L1047.7 200.0" stroke="#9ab9cc" stroke-width="1" stroke-dasharray="1.2 2"/><path d="M972 216 L971.6 216 L972.8 200.0 L973.6 200.0 L974.8 216 L976.4 216 L977.6 208.0 L978.4 208.0 L979.6 216 L981.6 216 L982.8 200.0 L983.6 200.0 L984.8 216 L995.9 216 L997.1 208.0 L997.9 208.0 L999.1 216 L999.7 216 L1000.9 208.0 L1001.7 208.0 L1002.9 216 L1005.4 216 L1006.6 200.0 L1007.4 200.0 L1008.6 216 L1018.3 216 L1019.5 200.0 L1020.3 200.0 L1021.5 216 L1028.0 216 L1029.2 208.0 L1030.0 208.0 L1031.2 216 L1034.6 216 L1035.8 200.0 L1036.6 200.0 L1037.8 216 L1037.8 216 L1039.0 200.0 L1039.8 200.0 L1041.0 216 L1049.5 216" fill="#d5ebf8" stroke="#4598cc" stroke-width="1.6" stroke-linejoin="round"/></svg>
<div class="card" style="left:256px;top:247px;width:1086px;height:388px;"></div>
<div class="ttl" style="left:272px;top:265px"><span>Total sales over time</span></div>
<div class="abs" style="left:272px;top:290px;font-size:21.6px;font-weight:normal;-webkit-text-stroke:.6px #303030;color:#303030">$2,470.85</div>
<div class="abs" style="left:376px;top:298px;font-size:11.5px;font-weight:normal;-webkit-text-stroke:.45px #616161;color:#616161;white-space:nowrap"><svg width="7.8" height="7.8" viewBox="0 0 8 8" style="vertical-align:1.3px;margin-right:3px"><path d="M1.3 1.8 L4.6 5.1" stroke="#616161" stroke-width="1.7"/><path d="M7.2 2.8 V7.2 H2.8 Z" fill="#616161" stroke="#616161" stroke-width=".6" stroke-linejoin="round"/></svg>9%</div>
<div class="abs" style="left:331px;top:335.4px;width:992px;height:1px;background:#ebebeb"></div>
<div class="abs" style="left:275px;top:328.9px;font-size:11px;font-weight:normal;color:#666;white-space:nowrap;letter-spacing:.65px">$400</div>
<div class="abs" style="left:331px;top:406.7px;width:992px;height:1px;background:#ebebeb"></div>
<div class="abs" style="left:275px;top:400.2px;font-size:11px;font-weight:normal;color:#666;white-space:nowrap;letter-spacing:.65px">$200</div>
<div class="abs" style="left:331px;top:478.0px;width:992px;height:1px;background:#ebebeb"></div>
<div class="abs" style="left:275px;top:471.5px;font-size:11px;font-weight:normal;color:#666;white-space:nowrap;letter-spacing:.65px">$0</div>
<div class="abs" style="left:331px;top:549.3px;width:992px;height:1px;background:#ebebeb"></div>
<div class="abs" style="left:275px;top:542.8px;font-size:11px;font-weight:normal;color:#666;white-space:nowrap;letter-spacing:.65px">-$200</div>
<div class="abs" style="left:291.5px;top:565px;width:80px;text-align:center;font-size:11px;color:#616161">12 Feb</div>
<div class="abs" style="left:358.3px;top:565px;width:80px;text-align:center;font-size:11px;color:#616161">18 Feb</div>
<div class="abs" style="left:425.1px;top:565px;width:80px;text-align:center;font-size:11px;color:#616161">24 Feb</div>
<div class="abs" style="left:491.9px;top:565px;width:80px;text-align:center;font-size:11px;color:#616161">2 Mar</div>
<div class="abs" style="left:558.7px;top:565px;width:80px;text-align:center;font-size:11px;color:#616161">8 Mar</div>
<div class="abs" style="left:625.5px;top:565px;width:80px;text-align:center;font-size:11px;color:#616161">14 Mar</div>
<div class="abs" style="left:692.4px;top:565px;width:80px;text-align:center;font-size:11px;color:#616161">20 Mar</div>
<div class="abs" style="left:759.2px;top:565px;width:80px;text-align:center;font-size:11px;color:#616161">26 Mar</div>
<div class="abs" style="left:826.0px;top:565px;width:80px;text-align:center;font-size:11px;color:#616161">1 Apr</div>
<div class="abs" style="left:892.8px;top:565px;width:80px;text-align:center;font-size:11px;color:#616161">7 Apr</div>
<div class="abs" style="left:959.6px;top:565px;width:80px;text-align:center;font-size:11px;color:#616161">13 Apr</div>
<div class="abs" style="left:1026.4px;top:565px;width:80px;text-align:center;font-size:11px;color:#616161">19 Apr</div>
<div class="abs" style="left:1093.2px;top:565px;width:80px;text-align:center;font-size:11px;color:#616161">25 Apr</div>
<div class="abs" style="left:1160.0px;top:565px;width:80px;text-align:center;font-size:11px;color:#616161">1 May</div>
<div class="abs" style="left:1226.8px;top:565px;width:80px;text-align:center;font-size:11px;color:#616161">7 May</div>
<div class="abs" style="left:649px;top:607.5px;width:13px;height:2px;background:#4598cc;border-radius:1px"></div>
<div class="abs" style="left:667px;top:601.5px;font-size:11px;font-weight:normal;color:#616161;white-space:nowrap;">12 Feb–12 May 2025</div>
<svg class="abs" style="left:790px;top:606.5px" width="16" height="4"><path d="M1 2 H15" stroke="#9ab9cc" stroke-width="1.6" stroke-dasharray="1.6 3" stroke-linecap="round"/></svg>
<div class="abs" style="left:809px;top:601.5px;font-size:11px;font-weight:normal;color:#616161;white-space:nowrap;">14 Nov 2024–11 Feb 2025</div>
<svg class="abs" style="left:0;top:0;overflow:visible" width="1" height="1">
<defs><linearGradient id="g1" x1="0" y1="400" x2="0" y2="545" gradientUnits="userSpaceOnUse"><stop offset="0" stop-color="#4598cc" stop-opacity="0.0"/><stop offset=".45" stop-color="#4598cc" stop-opacity=".045"/><stop offset=".6" stop-color="#4598cc" stop-opacity=".035"/><stop offset=".95" stop-color="#4598cc" stop-opacity="0"/></linearGradient></defs>
<path d="M331.5 461.6 C337.1 461.6 337.1 461.6 342.6 461.6 C348.2 461.6 348.2 400.0 353.8 400.0 C359.3 400.0 359.3 479.0 364.9 479.0 C370.5 479.0 370.5 479.0 376.0 479.0 C381.6 479.0 381.6 451.0 387.2 451.0 C392.7 451.0 392.7 422.0 398.3 422.0 C403.9 422.0 403.9 479.0 409.4 479.0 C415.0 479.0 415.0 479.0 420.6 479.0 C426.1 479.0 426.1 443.0 431.7 443.0 C437.3 443.0 437.3 479.0 442.9 479.0 C448.4 479.0 448.4 479.0 454.0 479.0 C459.6 479.0 459.6 475.0 465.1 475.0 C470.7 475.0 470.7 425.0 476.3 425.0 C481.8 425.0 481.8 450.0 487.4 450.0 C493.0 450.0 493.0 479.0 498.5 479.0 C504.1 479.0 504.1 472.0 509.7 472.0 C515.2 472.0 515.2 465.0 520.8 465.0 C526.4 465.0 526.4 479.0 531.9 479.0 C537.5 479.0 537.5 479.0 543.1 479.0 C548.6 479.0 548.6 457.6 554.2 457.6 C559.8 457.6 559.8 479.0 565.3 479.0 C570.9 479.0 570.9 479.0 576.5 479.0 C582.0 479.0 582.0 479.0 587.6 479.0 C593.2 479.0 593.2 457.6 598.7 457.6 C604.3 457.6 604.3 460.0 609.9 460.0 C615.4 460.0 615.4 474.0 621.0 474.0 C626.6 474.0 626.6 479.0 632.1 479.0 C637.7 479.0 637.7 479.0 643.3 479.0 C648.8 479.0 648.8 457.0 654.4 457.0 C660.0 457.0 660.0 479.0 665.5 479.0 C671.1 479.0 671.1 479.0 676.7 479.0 C682.3 479.0 682.3 479.0 687.8 479.0 C693.4 479.0 693.4 457.0 699.0 457.0 C704.5 457.0 704.5 471.0 710.1 471.0 C715.7 471.0 715.7 479.0 721.2 479.0 C726.8 479.0 726.8 479.0 732.4 479.0 C737.9 479.0 737.9 460.0 743.5 460.0 C749.1 460.0 749.1 479.0 754.6 479.0 C760.2 479.0 760.2 417.8 765.8 417.8 C771.3 417.8 771.3 522.7 776.9 522.7 C782.5 522.7 782.5 417.8 788.0 417.8 C793.6 417.8 793.6 417.8 799.2 417.8 C804.7 417.8 804.7 479.0 810.3 479.0 C815.9 479.0 815.9 479.0 821.4 479.0 C827.0 479.0 827.0 479.0 832.6 479.0 C838.1 479.0 838.1 445.0 843.7 445.0 C849.3 445.0 849.3 479.0 854.8 479.0 C860.4 479.0 860.4 479.0 866.0 479.0 C871.5 479.0 871.5 479.0 877.1 479.0 C882.7 479.0 882.7 475.0 888.2 475.0 C893.8 475.0 893.8 456.0 899.4 456.0 C905.0 456.0 905.0 479.0 910.5 479.0 C916.1 479.0 916.1 479.0 921.7 479.0 C927.2 479.0 927.2 479.0 932.8 479.0 C938.4 479.0 938.4 474.0 943.9 474.0 C949.5 474.0 949.5 479.0 955.1 479.0 C960.6 479.0 960.6 479.0 966.2 479.0 C971.8 479.0 971.8 479.0 977.3 479.0 C982.9 479.0 982.9 479.0 988.5 479.0 C994.0 479.0 994.0 479.0 999.6 479.0 C1005.2 479.0 1005.2 479.0 1010.7 479.0 C1016.3 479.0 1016.3 479.0 1021.9 479.0 C1027.4 479.0 1027.4 479.0 1033.0 479.0 C1038.6 479.0 1038.6 479.0 1044.1 479.0 C1049.7 479.0 1049.7 461.0 1055.3 461.0 C1060.8 461.0 1060.8 479.0 1066.4 479.0 C1072.0 479.0 1072.0 455.0 1077.5 455.0 C1083.1 455.0 1083.1 479.0 1088.7 479.0 C1094.2 479.0 1094.2 479.0 1099.8 479.0 C1105.4 479.0 1105.4 479.0 1110.9 479.0 C1116.5 479.0 1116.5 479.0 1122.1 479.0 C1127.7 479.0 1127.7 479.0 1133.2 479.0 C1138.8 479.0 1138.8 479.0 1144.4 479.0 C1149.9 479.0 1149.9 462.0 1155.5 462.0 C1161.1 462.0 1161.1 479.0 1166.6 479.0 C1172.2 479.0 1172.2 479.0 1177.8 479.0 C1183.3 479.0 1183.3 460.0 1188.9 460.0 C1194.5 460.0 1194.5 460.0 1200.0 460.0 C1205.6 460.0 1205.6 457.0 1211.2 457.0 C1216.7 457.0 1216.7 457.0 1222.3 457.0 C1227.9 457.0 1227.9 464.0 1233.4 464.0 C1239.0 464.0 1239.0 479.0 1244.6 479.0 C1250.1 479.0 1250.1 470.0 1255.7 470.0 C1261.3 470.0 1261.3 455.5 1266.8 455.5 C1272.4 455.5 1272.4 479.0 1278.0 479.0 C1283.5 479.0 1283.5 471.0 1289.1 471.0 C1294.7 471.0 1294.7 479.0 1300.2 479.0 C1305.8 479.0 1305.8 473.0 1311.4 473.0 C1316.9 473.0 1316.9 469.6 1322.5 469.6 L1322.5 545 L331.5 545 Z" fill="url(#g1)"/>
<path d="M331.5 479.0 C337.1 479.0 337.1 479.0 342.6 479.0 C348.2 479.0 348.2 441.7 353.8 441.7 C359.3 441.7 359.3 464.0 364.9 464.0 C370.5 464.0 370.5 479.0 376.0 479.0 C381.6 479.0 381.6 479.0 387.2 479.0 C392.7 479.0 392.7 479.0 398.3 479.0 C403.9 479.0 403.9 479.0 409.4 479.0 C415.0 479.0 415.0 461.6 420.6 461.6 C426.1 461.6 426.1 479.0 431.7 479.0 C437.3 479.0 437.3 479.0 442.9 479.0 C448.4 479.0 448.4 463.0 454.0 463.0 C459.6 463.0 459.6 479.0 465.1 479.0 C470.7 479.0 470.7 479.0 476.3 479.0 C481.8 479.0 481.8 479.0 487.4 479.0 C493.0 479.0 493.0 457.6 498.5 457.6 C504.1 457.6 504.1 468.0 509.7 468.0 C515.2 468.0 515.2 460.0 520.8 460.0 C526.4 460.0 526.4 496.0 531.9 496.0 C537.5 496.0 537.5 479.0 543.1 479.0 C548.6 479.0 548.6 479.0 554.2 479.0 C559.8 479.0 559.8 479.0 565.3 479.0 C570.9 479.0 570.9 447.0 576.5 447.0 C582.0 447.0 582.0 397.8 587.6 397.8 C593.2 397.8 593.2 479.0 598.7 479.0 C604.3 479.0 604.3 479.0 609.9 479.0 C615.4 479.0 615.4 496.0 621.0 496.0 C626.6 496.0 626.6 479.0 632.1 479.0 C637.7 479.0 637.7 479.0 643.3 479.0 C648.8 479.0 648.8 479.0 654.4 479.0 C660.0 479.0 660.0 479.0 665.5 479.0 C671.1 479.0 671.1 461.0 676.7 461.0 C682.3 461.0 682.3 479.0 687.8 479.0 C693.4 479.0 693.4 441.0 699.0 441.0 C704.5 441.0 704.5 479.0 710.1 479.0 C715.7 479.0 715.7 479.0 721.2 479.0 C726.8 479.0 726.8 479.0 732.4 479.0 C737.9 479.0 737.9 479.0 743.5 479.0 C749.1 479.0 749.1 479.0 754.6 479.0 C760.2 479.0 760.2 461.6 765.8 461.6 C771.3 461.6 771.3 479.0 776.9 479.0 C782.5 479.0 782.5 479.0 788.0 479.0 C793.6 479.0 793.6 449.6 799.2 449.6 C804.7 449.6 804.7 444.0 810.3 444.0 C815.9 444.0 815.9 479.0 821.4 479.0 C827.0 479.0 827.0 479.0 832.6 479.0 C838.1 479.0 838.1 479.0 843.7 479.0 C849.3 479.0 849.3 479.0 854.8 479.0 C860.4 479.0 860.4 479.0 866.0 479.0 C871.5 479.0 871.5 479.0 877.1 479.0 C882.7 479.0 882.7 479.0 888.2 479.0 C893.8 479.0 893.8 479.0 899.4 479.0 C905.0 479.0 905.0 479.0 910.5 479.0 C916.1 479.0 916.1 479.0 921.7 479.0 C927.2 479.0 927.2 479.0 932.8 479.0 C938.4 479.0 938.4 479.0 943.9 479.0 C949.5 479.0 949.5 479.0 955.1 479.0 C960.6 479.0 960.6 479.0 966.2 479.0 C971.8 479.0 971.8 479.0 977.3 479.0 C982.9 479.0 982.9 444.0 988.5 444.0 C994.0 444.0 994.0 417.0 999.6 417.0 C1005.2 417.0 1005.2 440.0 1010.7 440.0 C1016.3 440.0 1016.3 479.0 1021.9 479.0 C1027.4 479.0 1027.4 437.7 1033.0 437.7 C1038.6 437.7 1038.6 466.0 1044.1 466.0 C1049.7 466.0 1049.7 479.0 1055.3 479.0 C1060.8 479.0 1060.8 479.0 1066.4 479.0 C1072.0 479.0 1072.0 479.0 1077.5 479.0 C1083.1 479.0 1083.1 468.0 1088.7 468.0 C1094.2 468.0 1094.2 479.0 1099.8 479.0 C1105.4 479.0 1105.4 415.0 1110.9 415.0 C1116.5 415.0 1116.5 462.0 1122.1 462.0 C1127.7 462.0 1127.7 470.0 1133.2 470.0 C1138.8 470.0 1138.8 479.0 1144.4 479.0 C1149.9 479.0 1149.9 455.8 1155.5 455.8 C1161.1 455.8 1161.1 479.0 1166.6 479.0 C1172.2 479.0 1172.2 479.0 1177.8 479.0 C1183.3 479.0 1183.3 464.0 1188.9 464.0 C1194.5 464.0 1194.5 460.0 1200.0 460.0 C1205.6 460.0 1205.6 479.0 1211.2 479.0 C1216.7 479.0 1216.7 479.0 1222.3 479.0 C1227.9 479.0 1227.9 479.0 1233.4 479.0 C1239.0 479.0 1239.0 380.0 1244.6 380.0 C1250.1 380.0 1250.1 368.0 1255.7 368.0 C1261.3 368.0 1261.3 479.0 1266.8 479.0 C1272.4 479.0 1272.4 429.7 1278.0 429.7 C1283.5 429.7 1283.5 479.0 1289.1 479.0 C1294.7 479.0 1294.7 479.0 1300.2 479.0 C1305.8 479.0 1305.8 444.0 1311.4 444.0 C1316.9 444.0 1316.9 479.0 1322.5 479.0" fill="none" stroke="#8aaec6" stroke-width="1.8" stroke-dasharray="0.1 4" stroke-linecap="round"/>
<path d="M331.5 461.6 C337.1 461.6 337.1 461.6 342.6 461.6 C348.2 461.6 348.2 400.0 353.8 400.0 C359.3 400.0 359.3 479.0 364.9 479.0 C370.5 479.0 370.5 479.0 376.0 479.0 C381.6 479.0 381.6 451.0 387.2 451.0 C392.7 451.0 392.7 422.0 398.3 422.0 C403.9 422.0 403.9 479.0 409.4 479.0 C415.0 479.0 415.0 479.0 420.6 479.0 C426.1 479.0 426.1 443.0 431.7 443.0 C437.3 443.0 437.3 479.0 442.9 479.0 C448.4 479.0 448.4 479.0 454.0 479.0 C459.6 479.0 459.6 475.0 465.1 475.0 C470.7 475.0 470.7 425.0 476.3 425.0 C481.8 425.0 481.8 450.0 487.4 450.0 C493.0 450.0 493.0 479.0 498.5 479.0 C504.1 479.0 504.1 472.0 509.7 472.0 C515.2 472.0 515.2 465.0 520.8 465.0 C526.4 465.0 526.4 479.0 531.9 479.0 C537.5 479.0 537.5 479.0 543.1 479.0 C548.6 479.0 548.6 457.6 554.2 457.6 C559.8 457.6 559.8 479.0 565.3 479.0 C570.9 479.0 570.9 479.0 576.5 479.0 C582.0 479.0 582.0 479.0 587.6 479.0 C593.2 479.0 593.2 457.6 598.7 457.6 C604.3 457.6 604.3 460.0 609.9 460.0 C615.4 460.0 615.4 474.0 621.0 474.0 C626.6 474.0 626.6 479.0 632.1 479.0 C637.7 479.0 637.7 479.0 643.3 479.0 C648.8 479.0 648.8 457.0 654.4 457.0 C660.0 457.0 660.0 479.0 665.5 479.0 C671.1 479.0 671.1 479.0 676.7 479.0 C682.3 479.0 682.3 479.0 687.8 479.0 C693.4 479.0 693.4 457.0 699.0 457.0 C704.5 457.0 704.5 471.0 710.1 471.0 C715.7 471.0 715.7 479.0 721.2 479.0 C726.8 479.0 726.8 479.0 732.4 479.0 C737.9 479.0 737.9 460.0 743.5 460.0 C749.1 460.0 749.1 479.0 754.6 479.0 C760.2 479.0 760.2 417.8 765.8 417.8 C771.3 417.8 771.3 522.7 776.9 522.7 C782.5 522.7 782.5 417.8 788.0 417.8 C793.6 417.8 793.6 417.8 799.2 417.8 C804.7 417.8 804.7 479.0 810.3 479.0 C815.9 479.0 815.9 479.0 821.4 479.0 C827.0 479.0 827.0 479.0 832.6 479.0 C838.1 479.0 838.1 445.0 843.7 445.0 C849.3 445.0 849.3 479.0 854.8 479.0 C860.4 479.0 860.4 479.0 866.0 479.0 C871.5 479.0 871.5 479.0 877.1 479.0 C882.7 479.0 882.7 475.0 888.2 475.0 C893.8 475.0 893.8 456.0 899.4 456.0 C905.0 456.0 905.0 479.0 910.5 479.0 C916.1 479.0 916.1 479.0 921.7 479.0 C927.2 479.0 927.2 479.0 932.8 479.0 C938.4 479.0 938.4 474.0 943.9 474.0 C949.5 474.0 949.5 479.0 955.1 479.0 C960.6 479.0 960.6 479.0 966.2 479.0 C971.8 479.0 971.8 479.0 977.3 479.0 C982.9 479.0 982.9 479.0 988.5 479.0 C994.0 479.0 994.0 479.0 999.6 479.0 C1005.2 479.0 1005.2 479.0 1010.7 479.0 C1016.3 479.0 1016.3 479.0 1021.9 479.0 C1027.4 479.0 1027.4 479.0 1033.0 479.0 C1038.6 479.0 1038.6 479.0 1044.1 479.0 C1049.7 479.0 1049.7 461.0 1055.3 461.0 C1060.8 461.0 1060.8 479.0 1066.4 479.0 C1072.0 479.0 1072.0 455.0 1077.5 455.0 C1083.1 455.0 1083.1 479.0 1088.7 479.0 C1094.2 479.0 1094.2 479.0 1099.8 479.0 C1105.4 479.0 1105.4 479.0 1110.9 479.0 C1116.5 479.0 1116.5 479.0 1122.1 479.0 C1127.7 479.0 1127.7 479.0 1133.2 479.0 C1138.8 479.0 1138.8 479.0 1144.4 479.0 C1149.9 479.0 1149.9 462.0 1155.5 462.0 C1161.1 462.0 1161.1 479.0 1166.6 479.0 C1172.2 479.0 1172.2 479.0 1177.8 479.0 C1183.3 479.0 1183.3 460.0 1188.9 460.0 C1194.5 460.0 1194.5 460.0 1200.0 460.0 C1205.6 460.0 1205.6 457.0 1211.2 457.0 C1216.7 457.0 1216.7 457.0 1222.3 457.0 C1227.9 457.0 1227.9 464.0 1233.4 464.0 C1239.0 464.0 1239.0 479.0 1244.6 479.0 C1250.1 479.0 1250.1 470.0 1255.7 470.0 C1261.3 470.0 1261.3 455.5 1266.8 455.5 C1272.4 455.5 1272.4 479.0 1278.0 479.0 C1283.5 479.0 1283.5 471.0 1289.1 471.0 C1294.7 471.0 1294.7 479.0 1300.2 479.0 C1305.8 479.0 1305.8 473.0 1311.4 473.0 C1316.9 473.0 1316.9 469.6 1322.5 469.6" fill="none" stroke="#4598cc" stroke-width="2" stroke-linejoin="round"/>
</svg>
<div class="card" style="left:1359px;top:247px;width:535px;height:388px;"></div>
<div class="ttl" style="left:1375px;top:265px"><span>Total sales breakdown</span></div>
<div class="abs" style="left:1375px;top:291.5px;width:502px;height:37.5px;background:#f7f7f7;border-radius:8px"></div>
<div class="abs" style="left:1387px;top:303.0px;font-size:13.8px;font-weight:normal;color:#4b5a9b;white-space:nowrap;">Gross sales</div>
<div class="abs" style="right:101px;top:302.5px;font-size:14.5px;font-weight:normal;color:#303030;white-space:nowrap;">$2,853.43</div>
<div class="abs" style="left:1815px;width:60px;text-align:center;top:305.0px;font-size:11.5px;font-weight:normal;-webkit-text-stroke:.45px #616161;color:#616161;white-space:nowrap"><svg width="7.8" height="7.8" viewBox="0 0 8 8" style="vertical-align:1.3px;margin-right:3px"><path d="M1.3 1.8 L4.6 5.1" stroke="#616161" stroke-width="1.7"/><path d="M7.2 2.8 V7.2 H2.8 Z" fill="#616161" stroke="#616161" stroke-width=".6" stroke-linejoin="round"/></svg>27%</div>
<div class="abs" style="left:1375px;top:333.1px;width:502px;height:37.5px;background:#f7f7f7;border-radius:8px"></div>
<div class="abs" style="left:1387px;top:344.55px;font-size:13.8px;font-weight:normal;color:#4b5a9b;white-space:nowrap;">Discounts</div>
<div class="abs" style="right:101px;top:344.05px;font-size:14.5px;font-weight:normal;color:#303030;white-space:nowrap;">-$425.96</div>
<div class="abs" style="left:1815px;width:60px;text-align:center;top:346.55px;font-size:11.5px;font-weight:normal;-webkit-text-stroke:.45px #0d8a4f;color:#0d8a4f;white-space:nowrap"><svg width="7.8" height="7.8" viewBox="0 0 8 8" style="vertical-align:1.3px;margin-right:3px"><path d="M1.3 6.7 L4.6 3.4" stroke="#0d8a4f" stroke-width="1.7"/><path d="M7.2 5.7 V1.3 H2.8 Z" fill="#0d8a4f" stroke="#0d8a4f" stroke-width=".6" stroke-linejoin="round"/></svg>68%</div>
<div class="abs" style="left:1375px;top:374.6px;width:502px;height:37.5px;background:#f7f7f7;border-radius:8px"></div>
<div class="abs" style="left:1387px;top:386.1px;font-size:13.8px;font-weight:normal;color:#4b5a9b;white-space:nowrap;">Returns</div>
<div class="abs" style="right:101px;top:385.6px;font-size:14.5px;font-weight:normal;color:#303030;white-space:nowrap;">-$183.72</div>
<div class="abs" style="left:1815px;width:60px;text-align:center;top:388.1px;font-size:11.5px;font-weight:normal;-webkit-text-stroke:.45px #0d8a4f;color:#0d8a4f;white-space:nowrap"><svg width="7.8" height="7.8" viewBox="0 0 8 8" style="vertical-align:1.3px;margin-right:3px"><path d="M1.3 1.8 L4.6 5.1" stroke="#0d8a4f" stroke-width="1.7"/><path d="M7.2 2.8 V7.2 H2.8 Z" fill="#0d8a4f" stroke="#0d8a4f" stroke-width=".6" stroke-linejoin="round"/></svg>10%</div>
<div class="abs" style="left:1375px;top:416.1px;width:502px;height:37.5px;background:#f7f7f7;border-radius:8px"></div>
<div class="abs" style="left:1387px;top:427.65px;font-size:13.8px;font-weight:normal;color:#4b5a9b;white-space:nowrap;">Net sales</div>
<div class="abs" style="right:101px;top:427.15px;font-size:14.5px;font-weight:normal;color:#303030;white-space:nowrap;">$2,243.75</div>
<div class="abs" style="left:1815px;width:60px;text-align:center;top:429.65px;font-size:11.5px;font-weight:normal;-webkit-text-stroke:.45px #616161;color:#616161;white-space:nowrap"><svg width="7.8" height="7.8" viewBox="0 0 8 8" style="vertical-align:1.3px;margin-right:3px"><path d="M1.3 1.8 L4.6 5.1" stroke="#616161" stroke-width="1.7"/><path d="M7.2 2.8 V7.2 H2.8 Z" fill="#616161" stroke="#616161" stroke-width=".6" stroke-linejoin="round"/></svg>6%</div>
<div class="abs" style="left:1375px;top:457.7px;width:502px;height:37.5px;background:#f7f7f7;border-radius:8px"></div>
<div class="abs" style="left:1387px;top:469.2px;font-size:13.8px;font-weight:normal;color:#4b5a9b;white-space:nowrap;">Shipping charges</div>
<div class="abs" style="right:101px;top:468.7px;font-size:14.5px;font-weight:normal;color:#303030;white-space:nowrap;">$138.67</div>
<div class="abs" style="left:1815px;width:60px;text-align:center;top:471.2px;font-size:11.5px;font-weight:normal;-webkit-text-stroke:.45px #616161;color:#616161;white-space:nowrap"><svg width="7.8" height="7.8" viewBox="0 0 8 8" style="vertical-align:1.3px;margin-right:3px"><path d="M1.3 1.8 L4.6 5.1" stroke="#616161" stroke-width="1.7"/><path d="M7.2 2.8 V7.2 H2.8 Z" fill="#616161" stroke="#616161" stroke-width=".6" stroke-linejoin="round"/></svg>39%</div>
<div class="abs" style="left:1375px;top:499.2px;width:502px;height:37.5px;background:#f7f7f7;border-radius:8px"></div>
<div class="abs" style="left:1387px;top:510.75px;font-size:13.8px;font-weight:normal;color:#4b5a9b;white-space:nowrap;">Return fees</div>
<div class="abs" style="right:101px;top:510.25px;font-size:14.5px;font-weight:normal;color:#303030;white-space:nowrap;">$0.00</div>
<div class="abs" style="left:1841px;top:517.8px;width:12px;height:1.3px;background:#8a8a8a"></div>
<div class="abs" style="left:1375px;top:540.8px;width:502px;height:37.5px;background:#f7f7f7;border-radius:8px"></div>
<div class="abs" style="left:1387px;top:552.3px;font-size:13.8px;font-weight:normal;color:#4b5a9b;white-space:nowrap;">Taxes</div>
<div class="abs" style="right:101px;top:551.8px;font-size:14.5px;font-weight:normal;color:#303030;white-space:nowrap;">$88.43</div>
<div class="abs" style="left:1815px;width:60px;text-align:center;top:554.3px;font-size:11.5px;font-weight:normal;-webkit-text-stroke:.45px #8a8a8a;color:#8a8a8a;white-space:nowrap"><svg width="7.8" height="7.8" viewBox="0 0 8 8" style="vertical-align:1.3px;margin-right:3px"><path d="M1.3 1.8 L4.6 5.1" stroke="#8a8a8a" stroke-width="1.7"/><path d="M7.2 2.8 V7.2 H2.8 Z" fill="#8a8a8a" stroke="#8a8a8a" stroke-width=".6" stroke-linejoin="round"/></svg>25%</div>
<div class="abs" style="left:1375px;top:582.3px;width:502px;height:37.5px;background:#f7f7f7;border-radius:8px"></div>
<div class="abs" style="left:1387px;top:593.8499999999999px;font-size:13.8px;font-weight:normal;color:#4b5a9b;white-space:nowrap;">Total sales</div>
<div class="abs" style="right:101px;top:593.3499999999999px;font-size:14.5px;font-weight:normal;color:#303030;white-space:nowrap;">$2,470.85</div>
<div class="abs" style="left:1815px;width:60px;text-align:center;top:595.8499999999999px;font-size:11.5px;font-weight:normal;-webkit-text-stroke:.45px #616161;color:#616161;white-space:nowrap"><svg width="7.8" height="7.8" viewBox="0 0 8 8" style="vertical-align:1.3px;margin-right:3px"><path d="M1.3 1.8 L4.6 5.1" stroke="#616161" stroke-width="1.7"/><path d="M7.2 2.8 V7.2 H2.8 Z" fill="#616161" stroke="#616161" stroke-width=".6" stroke-linejoin="round"/></svg>9%</div>
<div class="card" style="left:256px;top:652px;width:535px;height:254px;"></div>
<div class="ttl" style="left:272px;top:670px"><span>Total sales by sales channel</span></div>
<svg class="abs" style="left:0;top:0;overflow:visible" width="1" height="1"><path d="M388.20 705.73 A87 87 0 0 1 440.79 860.20 L431.02 847.52 A71 71 0 0 0 388.20 721.74 Z" fill="#3aa8e8" stroke="#3aa8e8" stroke-width="2" stroke-linejoin="round"/><path d="M437.14 863.01 A87 87 0 0 1 328.73 858.27 L339.56 846.49 A71 71 0 0 0 427.38 850.33 Z" fill="#7b2ae0" stroke="#7b2ae0" stroke-width="2" stroke-linejoin="round"/><path d="M325.34 855.16 A87 87 0 0 1 298.92 790.75 L314.91 791.53 A71 71 0 0 0 336.17 843.38 Z" fill="#6b7ee3" stroke="#6b7ee3" stroke-width="2" stroke-linejoin="round"/><path d="M299.15 786.15 A87 87 0 0 1 330.19 725.87 L340.11 738.44 A71 71 0 0 0 315.13 786.94 Z" fill="#dd42a9" stroke="#dd42a9" stroke-width="2" stroke-linejoin="round"/><path d="M333.80 723.02 A87 87 0 0 1 383.60 705.73 L383.60 721.74 A71 71 0 0 0 343.72 735.58 Z" fill="#21b8b0" stroke="#21b8b0" stroke-width="2" stroke-linejoin="round"/></svg>
<div class="abs" style="left:306px;top:773px;width:160px;text-align:center;font-size:22px;font-weight:normal;-webkit-text-stroke:.5px #303030;letter-spacing:.3px;color:#303030">$2.5T</div>
<div class="abs" style="left:306px;top:800px;width:160px;text-align:center;font-size:11.5px;font-weight:normal;-webkit-text-stroke:.4px #616161;color:#616161"><svg width="7.8" height="7.8" viewBox="0 0 8 8" style="vertical-align:1.3px;margin-right:3px"><path d="M1.3 1.8 L4.6 5.1" stroke="#616161" stroke-width="1.7"/><path d="M7.2 2.8 V7.2 H2.8 Z" fill="#616161" stroke="#616161" stroke-width=".6" stroke-linejoin="round"/></svg>9%</div>
<div class="abs" style="left:504px;top:731.7px;width:12px;height:12px;background:#3aa8e8;border-radius:2px"></div>
<div class="abs" style="left:519px;top:730.2px;font-size:13px;font-weight:normal;color:#616161;white-space:nowrap;">TikTok</div>
<div class="abs" style="right:1204.5px;top:730.2px;font-size:13px;font-weight:normal;color:#616161;white-space:nowrap;">$977.53</div>
<div class="abs" style="left:719px;top:732.2px;font-size:11.5px;font-weight:normal;-webkit-text-stroke:.45px #616161;color:#616161;white-space:nowrap"><svg width="7.8" height="7.8" viewBox="0 0 8 8" style="vertical-align:1.3px;margin-right:3px"><path d="M1.3 1.8 L4.6 5.1" stroke="#616161" stroke-width="1.7"/><path d="M7.2 2.8 V7.2 H2.8 Z" fill="#616161" stroke="#616161" stroke-width=".6" stroke-linejoin="round"/></svg>42%</div>
<div class="abs" style="left:504px;top:759.7px;width:12px;height:12px;background:#7b2ae0;border-radius:2px"></div>
<div class="abs" style="left:519px;top:758.2px;font-size:13px;font-weight:normal;color:#616161;white-space:nowrap;">Online Store</div>
<div class="abs" style="right:1204.5px;top:758.2px;font-size:13px;font-weight:normal;color:#616161;white-space:nowrap;">$550.17</div>
<div class="abs" style="left:719px;top:760.2px;font-size:11.5px;font-weight:normal;-webkit-text-stroke:.45px #0d8a4f;color:#0d8a4f;white-space:nowrap"><svg width="7.8" height="7.8" viewBox="0 0 8 8" style="vertical-align:1.3px;margin-right:3px"><path d="M1.3 6.7 L4.6 3.4" stroke="#0d8a4f" stroke-width="1.7"/><path d="M7.2 5.7 V1.3 H2.8 Z" fill="#0d8a4f" stroke="#0d8a4f" stroke-width=".6" stroke-linejoin="round"/></svg>8%</div>
<div class="abs" style="left:504px;top:787.7px;width:12px;height:12px;background:#6b7ee3;border-radius:2px"></div>
<div class="abs" style="left:519px;top:786.2px;font-size:13px;font-weight:normal;color:#616161;white-space:nowrap;">Modern Dropship</div>
<div class="abs" style="right:1204.5px;top:786.2px;font-size:13px;font-weight:normal;color:#616161;white-space:nowrap;">$344.48</div>
<div class="abs" style="left:719px;top:788.2px;font-size:11.5px;font-weight:normal;-webkit-text-stroke:.45px #616161;color:#616161;white-space:nowrap"><svg width="7.8" height="7.8" viewBox="0 0 8 8" style="vertical-align:1.3px;margin-right:3px"><path d="M1.3 1.8 L4.6 5.1" stroke="#616161" stroke-width="1.7"/><path d="M7.2 2.8 V7.2 H2.8 Z" fill="#616161" stroke="#616161" stroke-width=".6" stroke-linejoin="round"/></svg>28%</div>
<div class="abs" style="left:504px;top:815.7px;width:12px;height:12px;background:#dd42a9;border-radius:2px"></div>
<div class="abs" style="left:519px;top:814.2px;font-size:13px;font-weight:normal;color:#616161;white-space:nowrap;">CedCommerce Wal...</div>
<div class="abs" style="right:1204.5px;top:814.2px;font-size:13px;font-weight:normal;color:#616161;white-space:nowrap;">$335.57</div>
<div class="abs" style="left:720px;top:821.7px;width:11px;height:1.3px;background:#616161"></div>
<div class="abs" style="left:509px;top:850px;font-size:12px;font-weight:normal;color:#616161;white-space:nowrap;">+2 more</div>
<div class="card" style="left:807px;top:652px;width:535px;height:254px;"></div>
<div class="ttl" style="left:823px;top:670px"><span>Average order value over time</span></div>
<div class="abs" style="left:823px;top:695px;font-size:21.6px;font-weight:normal;-webkit-text-stroke:.6px #303030;color:#303030">$42.85</div>
<div class="abs" style="left:898px;top:702px;font-size:11.5px;font-weight:normal;-webkit-text-stroke:.45px #0d8a4f;color:#0d8a4f;white-space:nowrap"><svg width="7.8" height="7.8" viewBox="0 0 8 8" style="vertical-align:1.3px;margin-right:3px"><path d="M1.3 6.7 L4.6 3.4" stroke="#0d8a4f" stroke-width="1.7"/><path d="M7.2 5.7 V1.3 H2.8 Z" fill="#0d8a4f" stroke="#0d8a4f" stroke-width=".6" stroke-linejoin="round"/></svg>9%</div>
<div class="abs" style="left:875px;top:740.5px;width:447px;height:1px;background:#ebebeb"></div>
<div class="abs" style="left:826px;top:734px;font-size:11px;font-weight:normal;color:#666;white-space:nowrap;letter-spacing:.65px">$200</div>
<div class="abs" style="left:875px;top:819.0px;width:447px;height:1px;background:#ebebeb"></div>
<div class="abs" style="left:826px;top:812.5px;font-size:11px;font-weight:normal;color:#666;white-space:nowrap;letter-spacing:.65px">$0</div>
<div class="abs" style="left:835.0px;top:835px;width:80px;text-align:center;font-size:11px;color:#616161">12 Feb</div>
<div class="abs" style="left:900.2px;top:835px;width:80px;text-align:center;font-size:11px;color:#616161">25 Feb</div>
<div class="abs" style="left:965.4px;top:835px;width:80px;text-align:center;font-size:11px;color:#616161">10 Mar</div>
<div class="abs" style="left:1030.6px;top:835px;width:80px;text-align:center;font-size:11px;color:#616161">23 Mar</div>
<div class="abs" style="left:1095.8px;top:835px;width:80px;text-align:center;font-size:11px;color:#616161">5 Apr</div>
<div class="abs" style="left:1161.0px;top:835px;width:80px;text-align:center;font-size:11px;color:#616161">18 Apr</div>
<div class="abs" style="left:1226.2px;top:835px;width:80px;text-align:center;font-size:11px;color:#616161">1 May</div>
<div class="abs" style="left:924px;top:877px;width:12.5px;height:2px;background:#4598cc;border-radius:1px"></div>
<div class="abs" style="left:942px;top:871px;font-size:11px;font-weight:normal;color:#616161;white-space:nowrap;">12 Feb–12 May 2025</div>
<svg class="abs" style="left:1065px;top:876px" width="16" height="4"><path d="M1 2 H15" stroke="#8aaec6" stroke-width="1.8" stroke-dasharray="0.1 4" stroke-linecap="round"/></svg>
<div class="abs" style="left:1084px;top:871px;font-size:11px;font-weight:normal;color:#616161;white-space:nowrap;">14 Nov 2024–11 Feb 2025</div>
<svg class="abs" style="left:0;top:0;overflow:visible" width="1" height="1">
<path d="M885.0 781.8 L886.5 786.0 L887.5 792.0 L888.5 798.0 M950.3 802.7 L952.7 807.0 L953.9 811.0 M958.0 808.7 L960.5 801.0 M985.7 792.5 L988.1 784.8 L989.3 780.6 M1171.1 784.2 L1173.5 798.0 L1175.0 804.0 L1178.3 806.3 M1190.9 808.1 L1193.9 811.1 M1226.2 806.1 L1232.0 809.0 L1235.0 813.9 M1261.0 805.1 L1264.0 802.7 M1286.8 805.7 L1290.4 808.1 " fill="none" stroke="#8aaec6" stroke-width="1.8" stroke-dasharray="0.1 4" stroke-linecap="round"/>
<circle cx="915" cy="814" r=".9" fill="#9ab9cc"/><circle cx="930" cy="803" r=".9" fill="#9ab9cc"/><circle cx="1030.6" cy="801" r=".9" fill="#9ab9cc"/><circle cx="1040.8" cy="799.7" r=".9" fill="#9ab9cc"/><circle cx="1070.8" cy="801" r=".9" fill="#9ab9cc"/><circle cx="1085.7" cy="805.7" r=".9" fill="#9ab9cc"/><circle cx="1216.7" cy="813" r=".9" fill="#9ab9cc"/><circle cx="1301.8" cy="765.3" r=".9" fill="#9ab9cc"/><circle cx="1316.7" cy="801" r=".9" fill="#9ab9cc"/>
<path d="M875.0 813.5 C877.5 813.5 877.5 801.0 880.0 801.0 C882.5 801.0 882.5 792.0 885.0 792.0 C887.5 792.0 887.5 819.0 890.0 819.0 C892.6 819.0 892.6 819.0 895.1 819.0 C897.6 819.0 897.6 809.0 900.1 809.0 C902.6 809.0 902.6 801.5 905.1 801.5 C907.6 801.5 907.6 819.0 910.1 819.0 C912.6 819.0 912.6 819.0 915.1 819.0 C917.6 819.0 917.6 780.6 920.1 780.6 C922.6 780.6 922.6 819.0 925.1 819.0 C927.7 819.0 927.7 819.0 930.2 819.0 C932.7 819.0 932.7 816.0 935.2 816.0 C937.7 816.0 937.7 793.7 940.2 793.7 C942.7 793.7 942.7 805.0 945.2 805.0 C947.7 805.0 947.7 819.0 950.2 819.0 C952.7 819.0 952.7 815.0 955.2 815.0 C957.7 815.0 957.7 810.5 960.3 810.5 C962.8 810.5 962.8 819.0 965.3 819.0 C967.8 819.0 967.8 819.0 970.3 819.0 C972.8 819.0 972.8 799.0 975.3 799.0 C977.8 799.0 977.8 819.0 980.3 819.0 C982.8 819.0 982.8 819.0 985.3 819.0 C987.8 819.0 987.8 819.0 990.3 819.0 C992.9 819.0 992.9 798.5 995.4 798.5 C997.9 798.5 997.9 801.5 1000.4 801.5 C1002.9 801.5 1002.9 819.0 1005.4 819.0 C1007.9 819.0 1007.9 819.0 1010.4 819.0 C1012.9 819.0 1012.9 819.0 1015.4 819.0 C1017.9 819.0 1017.9 808.7 1020.4 808.7 C1022.9 808.7 1022.9 819.0 1025.5 819.0 C1028.0 819.0 1028.0 819.0 1030.5 819.0 C1033.0 819.0 1033.0 819.0 1035.5 819.0 C1038.0 819.0 1038.0 808.5 1040.5 808.5 C1043.0 808.5 1043.0 815.0 1045.5 815.0 C1048.0 815.0 1048.0 819.0 1050.5 819.0 C1053.0 819.0 1053.0 819.0 1055.5 819.0 C1058.0 819.0 1058.0 801.0 1060.6 801.0 C1063.1 801.0 1063.1 819.0 1065.6 819.0 C1068.1 819.0 1068.1 759.6 1070.6 759.6 C1073.1 759.6 1073.1 800.3 1075.6 800.3 C1078.1 800.3 1078.1 759.6 1080.6 759.6 C1083.1 759.6 1083.1 796.7 1085.6 796.7 C1088.1 796.7 1088.1 819.0 1090.6 819.0 C1093.2 819.0 1093.2 819.0 1095.7 819.0 C1098.2 819.0 1098.2 819.0 1100.7 819.0 C1103.2 819.0 1103.2 802.7 1105.7 802.7 C1108.2 802.7 1108.2 819.0 1110.7 819.0 C1113.2 819.0 1113.2 819.0 1115.7 819.0 C1118.2 819.0 1118.2 819.0 1120.7 819.0 C1123.2 819.0 1123.2 819.0 1125.8 819.0 C1128.3 819.0 1128.3 796.0 1130.8 796.0 C1133.3 796.0 1133.3 819.0 1135.8 819.0 C1138.3 819.0 1138.3 819.0 1140.8 819.0 C1143.3 819.0 1143.3 819.0 1145.8 819.0 C1148.3 819.0 1148.3 815.0 1150.8 815.0 C1153.3 815.0 1153.3 819.0 1155.8 819.0 C1158.3 819.0 1158.3 819.0 1160.9 819.0 C1163.4 819.0 1163.4 819.0 1165.9 819.0 C1168.4 819.0 1168.4 819.0 1170.9 819.0 C1173.4 819.0 1173.4 819.0 1175.9 819.0 C1178.4 819.0 1178.4 819.0 1180.9 819.0 C1183.4 819.0 1183.4 819.0 1185.9 819.0 C1188.4 819.0 1188.4 819.0 1190.9 819.0 C1193.5 819.0 1193.5 819.0 1196.0 819.0 C1198.5 819.0 1198.5 801.8 1201.0 801.8 C1203.5 801.8 1203.5 819.0 1206.0 819.0 C1208.5 819.0 1208.5 808.5 1211.0 808.5 C1213.5 808.5 1213.5 819.0 1216.0 819.0 C1218.5 819.0 1218.5 819.0 1221.0 819.0 C1223.5 819.0 1223.5 819.0 1226.0 819.0 C1228.6 819.0 1228.6 819.0 1231.1 819.0 C1233.6 819.0 1233.6 819.0 1236.1 819.0 C1238.6 819.0 1238.6 819.0 1241.1 819.0 C1243.6 819.0 1243.6 810.0 1246.1 810.0 C1248.6 810.0 1248.6 819.0 1251.1 819.0 C1253.6 819.0 1253.6 819.0 1256.1 819.0 C1258.6 819.0 1258.6 801.0 1261.2 801.0 C1263.7 801.0 1263.7 800.3 1266.2 800.3 C1268.7 800.3 1268.7 796.0 1271.2 796.0 C1273.7 796.0 1273.7 796.0 1276.2 796.0 C1278.7 796.0 1278.7 803.0 1281.2 803.0 C1283.7 803.0 1283.7 819.0 1286.2 819.0 C1288.7 819.0 1288.7 813.0 1291.2 813.0 C1293.8 813.0 1293.8 796.0 1296.3 796.0 C1298.8 796.0 1298.8 819.0 1301.3 819.0 C1303.8 819.0 1303.8 815.0 1306.3 815.0 C1308.8 815.0 1308.8 819.0 1311.3 819.0 C1313.8 819.0 1313.8 815.0 1316.3 815.0 C1318.8 815.0 1318.8 810.5 1321.3 810.5" fill="none" stroke="#4598cc" stroke-width="2" stroke-linejoin="round"/>
</svg>
<div class="card" style="left:1359px;top:652px;width:535px;height:254px;"></div>
<div class="ttl" style="left:1375px;top:670px"><span>Total sales by product</span></div>
<div class="abs" style="left:1375px;top:699px;font-size:11.7px;font-weight:normal;color:#616161;white-space:nowrap;">GrowMesh Complete Hydroponic Garden for growing all year, indoors and out. 16 plant aeropo...</div>
<div class="abs" style="left:1375px;top:716px;width:366px;height:33px;background:#38a7e8;border-radius:0 4px 4px 0"></div>
<div class="abs" style="left:1751px;top:726px;font-size:11.4px;font-weight:normal;color:#616161;white-space:nowrap;">$1,894.70</div>
<div class="abs" style="left:1813px;top:727px;font-size:12px;font-weight:normal;-webkit-text-stroke:.45px #616161;color:#616161;white-space:nowrap"><svg width="7.8" height="7.8" viewBox="0 0 8 8" style="vertical-align:1.3px;margin-right:3px"><path d="M1.3 1.8 L4.6 5.1" stroke="#616161" stroke-width="1.7"/><path d="M7.2 2.8 V7.2 H2.8 Z" fill="#616161" stroke="#616161" stroke-width=".6" stroke-linejoin="round"/></svg>5%</div>
<div class="abs" style="left:1375px;top:750.5px;width:384px;height:34px;background:#dfeef8;border-radius:0 4px 4px 0"></div>
<div class="abs" style="left:1769.5px;top:761px;font-size:11.4px;font-weight:normal;color:#616161;white-space:nowrap;">$1,991.05</div>
<div class="abs" style="left:1375px;top:804px;font-size:11.7px;font-weight:normal;color:#616161;white-space:nowrap;">50 Grow Plugs used for starting plants in the GrowMesh Garden kits · GrowMesh · None</div>
<div class="abs" style="left:1375px;top:821px;width:26px;height:33px;background:#38a7e8;border-radius:0 4px 4px 0"></div>
<div class="abs" style="left:1411.5px;top:831px;font-size:11.4px;font-weight:normal;color:#616161;white-space:nowrap;">$134.77</div>
<div class="abs" style="left:1462px;top:832px;font-size:12px;font-weight:normal;-webkit-text-stroke:.45px #0d8a4f;color:#0d8a4f;white-space:nowrap"><svg width="7.8" height="7.8" viewBox="0 0 8 8" style="vertical-align:1.3px;margin-right:3px"><path d="M1.3 6.7 L4.6 3.4" stroke="#0d8a4f" stroke-width="1.7"/><path d="M7.2 5.7 V1.3 H2.8 Z" fill="#0d8a4f" stroke="#0d8a4f" stroke-width=".6" stroke-linejoin="round"/></svg>476%</div>
<div class="abs" style="left:1375px;top:856.5px;width:5px;height:33px;background:#9fd0ea;border-radius:0 2px 2px 0"></div>
<div class="abs" style="left:1389.5px;top:866px;font-size:11.4px;font-weight:normal;color:#616161;white-space:nowrap;">$23.41</div>
<div class="card" style="left:256px;top:922px;width:535px;height:100px;"></div>
<div class="ttl" style="left:272px;top:940px"><span>Sessions over time</span></div>
<div class="card" style="left:807px;top:922px;width:535px;height:100px;"></div>
<div class="ttl" style="left:823px;top:940px"><span>Conversion rate over time</span></div>
<div class="card" style="left:1359px;top:922px;width:535px;height:100px;"></div>
<div class="ttl" style="left:1375px;top:940px"><span>Conversion rate breakdown</span></div>
<div class="abs" style="left:0;top:0;width:1919px;height:1px;background:#fbfbfe"></div>
<div class="abs" style="left:0;top:1px;width:1919px;height:1px;background:#0e0e13"></div>
<div class="abs" style="left:1905px;top:57px;width:14px;height:889px;background:#f1f1f1;border-top-right-radius:12px"></div>
<div class="abs" style="left:1912px;top:69px;width:6px;height:252px;background:#b5b5b5;border-radius:3px"></div>
<svg class="abs" style="left:1910px;top:60px" width="9" height="6"><path d="M0.5 5.5 L4.5 1 L8.5 5.5Z" fill="#a3a3a3"/></svg>
<svg class="abs" style="left:1910px;top:936px" width="9" height="6"><path d="M0.5 0.5 L4.5 5 L8.5 0.5Z" fill="#a3a3a3"/></svg>
</body></html>
